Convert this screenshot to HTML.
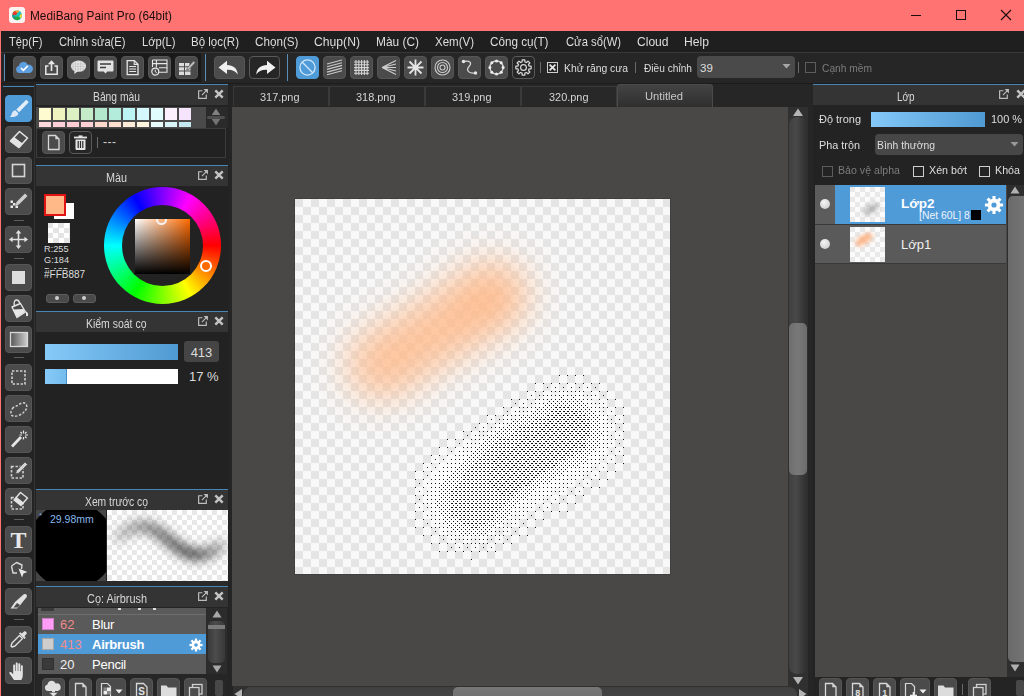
<!DOCTYPE html><html><head><meta charset="utf-8"><title>MediBang Paint Pro</title><style>
*{box-sizing:border-box}
html,body{margin:0;padding:0}
body{width:1024px;height:696px;overflow:hidden;background:#282828;font-family:"Liberation Sans",sans-serif;font-size:13px;color:#dcdcdc;position:relative}
.a{position:absolute}
.t{position:absolute;white-space:nowrap;line-height:1}
.btn{position:absolute;background:#4b4b4b;border-radius:4px;border:1px solid #565656}
.btn.dk{background:#262626;border:1px solid #5a5a5a}
.btn.on{background:#4f9bd8;border-color:#4f9bd8}
.btn svg{position:absolute;left:-1px;top:-1px}
.hd{position:absolute;background:#343434;border-top:1px solid #4a86b4;height:21px}
.hd .ti{position:absolute;left:0;right:0;top:4px;text-align:center;line-height:13px;font-size:13px;color:#d8d8d8}
.cb{position:absolute;width:11px;height:11px;border:1px solid #cfcfcf}
.cb.dis{border-color:#5c5c5c}
</style></head><body>
<div class="a" style="left:0;top:0;width:1024px;height:31px;background:#ff7373"></div>
<div class="a" style="left:0;top:0;width:1px;height:696px;background:#ff7373"></div>
<svg class="a" style="left:9px;top:7px" width="16" height="16" viewBox="0 0 16 16"><rect x="0" y="0" width="16" height="16" rx="3" fill="#fbf3f3"/>
<defs><clipPath id="cp"><circle cx="8.100" cy="8.300" r="4.900"/></clipPath><filter id="ib"><feGaussianBlur stdDeviation=".7"/></filter></defs>
<g clip-path="url(#cp)"><rect x="2" y="2" width="12" height="13" fill="#1fc4c0"/><g filter="url(#ib)"><circle cx="5.300" cy="5.200" r="3" fill="#e63a2a"/><circle cx="8.200" cy="3.800" r="1.900" fill="#ff9c2e"/><circle cx="7.600" cy="13.200" r="3.600" fill="#25a53f"/><circle cx="12.800" cy="9.200" r="2.200" fill="#e8d23c"/><circle cx="4" cy="10" r="2" fill="#1a9a8a"/></g></g></svg>
<div class="t fit" style="transform:scaleX(0.986);transform-origin:0 0;left:30px;top:10px;font-size:12px;color:#1b0d0d">MediBang Paint Pro (64bit)</div>
<div class="a" style="left:911px;top:15px;width:10px;height:1px;background:#1b0d0d"></div>
<div class="a" style="left:956px;top:10px;width:10px;height:10px;border:1px solid #1b0d0d"></div>
<svg class="a" style="left:1000px;top:9px" width="12" height="12" viewBox="0 0 12 12"><path d="M1 1L11 11M11 1L1 11" stroke="#1b0d0d" stroke-width="1.1" fill="none"/></svg>
<div class="a" style="left:1px;top:31px;width:1023px;height:21px;background:#1f1f1f"></div>
<div class="a" style="left:1px;top:52px;width:1023px;height:1px;background:#383838"></div>
<div class="t mn" style="transform:scaleX(0.859);transform-origin:0 0;left:9px;top:35px;font-size:13px;color:#dedede">Tệp(F)</div>
<div class="t mn" style="transform:scaleX(0.86);transform-origin:0 0;left:58.5px;top:35px;font-size:13px;color:#dedede">Chỉnh sửa(E)</div>
<div class="t mn" style="transform:scaleX(0.862);transform-origin:0 0;left:141.5px;top:35px;font-size:13px;color:#dedede">Lớp(L)</div>
<div class="t mn" style="transform:scaleX(0.886);transform-origin:0 0;left:191px;top:35px;font-size:13px;color:#dedede">Bộ lọc(R)</div>
<div class="t mn" style="transform:scaleX(0.898);transform-origin:0 0;left:255px;top:35px;font-size:13px;color:#dedede">Chọn(S)</div>
<div class="t mn" style="transform:scaleX(0.936);transform-origin:0 0;left:314px;top:35px;font-size:13px;color:#dedede">Chụp(N)</div>
<div class="t mn" style="transform:scaleX(0.916);transform-origin:0 0;left:376px;top:35px;font-size:13px;color:#dedede">Màu (C)</div>
<div class="t mn" style="transform:scaleX(0.885);transform-origin:0 0;left:435px;top:35px;font-size:13px;color:#dedede">Xem(V)</div>
<div class="t mn" style="transform:scaleX(0.9);transform-origin:0 0;left:490px;top:35px;font-size:13px;color:#dedede">Công cụ(T)</div>
<div class="t mn" style="transform:scaleX(0.865);transform-origin:0 0;left:565.5px;top:35px;font-size:13px;color:#dedede">Cửa sổ(W)</div>
<div class="t mn" style="transform:scaleX(0.927);transform-origin:0 0;left:636.5px;top:35px;font-size:13px;color:#dedede">Cloud</div>
<div class="t mn" style="transform:scaleX(0.935);transform-origin:0 0;left:684px;top:35px;font-size:13px;color:#dedede">Help</div>
<div class="a" style="left:1px;top:53px;width:1023px;height:30px;background:#262626"></div>
<div class="a" style="left:5px;top:53px;width:196px;height:29px;background:#1a1a1a"></div>
<div class="a" style="left:1px;top:83px;width:1023px;height:1px;background:#1c1c1c"></div>
<div class="a" style="left:4px;top:54px;width:1px;height:27px;background:#5b8fb8"></div>
<div class="a" style="left:205px;top:54px;width:1px;height:27px;background:#5b8fb8"></div>
<div class="a" style="left:287px;top:54px;width:1px;height:27px;background:#5b8fb8"></div>
<div class="btn " style="left:13px;top:56px;width:23px;height:23px"><svg width="23" height="23" viewBox="0 0 23 23" fill="none" stroke="none"><path d="M6.5 17a3.6 3.6 0 0 1-.6-7.1 4.6 4.6 0 0 1 8.8-1.2 4.2 4.2 0 0 1 2 8.3z" fill="#5d9fe0"/><path d="M8 12l2.4 2.4 4.4-4.6" stroke="#fff" stroke-width="1.7"/></svg></div>
<div class="btn " style="left:40px;top:56px;width:23px;height:23px"><svg width="23" height="23" viewBox="0 0 23 23" fill="none" stroke="none"><path d="M8.5 10H5.8v8.2h11.4V10h-2.7" stroke="#e6e6e6" stroke-width="1.5"/><path d="M11.5 15V5.5" stroke="#e6e6e6" stroke-width="1.7"/><path d="M7.8 8.2l3.7-4 3.7 4z" fill="#e6e6e6"/></svg></div>
<div class="btn " style="left:67px;top:56px;width:23px;height:23px"><svg width="23" height="23" viewBox="0 0 23 23" fill="none" stroke="none"><ellipse cx="11.5" cy="10.2" rx="7.6" ry="5.6" fill="#e6e6e6"/><path d="M7.5 14l-.2 4 3.6-2.8z" fill="#e6e6e6"/><path d="M6 6v9M8.5 5v10.5M11 4.5v11.5M13.5 4.5v11.5M16 5.5v10M4 8h15M4 10.5h15M4.5 13h14" stroke="#b4b4b4" stroke-width=".5"/></svg></div>
<div class="btn " style="left:94px;top:56px;width:23px;height:23px"><svg width="23" height="23" viewBox="0 0 23 23" fill="none" stroke="none"><path d="M4.5 4.5h14a1 1 0 0 1 1 1v9a1 1 0 0 1-1 1h-5.2l-1.8 2-1.8-2H4.5a1 1 0 0 1-1-1v-9a1 1 0 0 1 1-1z" fill="#e2e2e2"/><path d="M6 8h11M6 11.5h6" stroke="#3e3e3e" stroke-width="1.5"/></svg></div>
<div class="btn " style="left:121px;top:56px;width:23px;height:23px"><svg width="23" height="23" viewBox="0 0 23 23" fill="none" stroke="none"><path d="M6.2 4.6h7.2l3.6 3.6v10.4H6.2z" stroke="#e6e6e6" stroke-width="1.3"/><path d="M13.2 4.8v3.6h3.6" stroke="#e6e6e6" stroke-width="1.1"/><path d="M8.2 10.5h6.8M8.2 13h6.8M8.2 15.5h6.8" stroke="#e6e6e6" stroke-width="1.2"/></svg></div>
<div class="btn " style="left:148px;top:56px;width:23px;height:23px"><svg width="23" height="23" viewBox="0 0 23 23" fill="none" stroke="none"><path d="M4.5 4h14.5v12.2H10.5M4.5 4v7M4.5 7.6h14.5M8.4 4v7.4M11 11.8h8" stroke="#e6e6e6" stroke-width="1.1"/><circle cx="7.3" cy="15.6" r="3.5" stroke="#e6e6e6" stroke-width="1.2"/><path d="M7.3 13.6v2.2l1.5 1" stroke="#e6e6e6" stroke-width="1"/></svg></div>
<div class="btn " style="left:175px;top:56px;width:23px;height:23px"><svg width="23" height="23" viewBox="0 0 23 23" fill="none" stroke="none"><path d="M4 7h5v3.3H4zM10 7h4.5v3.3H10zM4 11.3h5v3.3H4zM10 11.3h5.5v3.3H10zM4 15.6h5v3.3H4zM10 15.6h5.5v3.3H10z" fill="#dcdcdc"/><path d="M12.5 11.5l6-6.5 1.8 1.7-6 6.5-2.6.9z" fill="#bdbdbd" stroke="#4b4b4b" stroke-width=".6"/></svg></div>
<div class="btn " style="left:214px;top:56px;width:31px;height:23px"><svg width="31" height="23" viewBox="0 0 31 23" fill="none" stroke="none"><path d="M4.5 11.5L13 4.8v4.2c6 .2 10.5 3.200 10.700 9.500c-2-3.600-5.500-5-10.700-4.800V18z" fill="#f0f0f0"/></svg></div>
<div class="btn dk" style="left:249px;top:56px;width:31px;height:23px"><svg width="31" height="23" viewBox="0 0 31 23" fill="none" stroke="none"><g transform="translate(31,0) scale(-1,1)"><path d="M4.5 11.5L13 4.8v4.2c6 .2 10.5 3.200 10.700 9.500c-2-3.600-5.500-5-10.700-4.800V18z" fill="#f0f0f0"/></g></svg></div>
<div class="btn on" style="left:296px;top:56px;width:23px;height:23px"><svg width="23" height="23" viewBox="0 0 23 23" fill="none" stroke="none"><circle cx="11.500" cy="11.500" r="7.600" stroke="#cfe6fa" stroke-width="1.300"/><path d="M6.300 6.300l10.400 10.400" stroke="#cfe6fa" stroke-width="1.300"/></svg></div>
<div class="btn " style="left:323px;top:56px;width:23px;height:23px"><svg width="23" height="23" viewBox="0 0 23 23" fill="none" stroke="none"><path d="M4 9.500l15-4M4 12.200l15-4M4 14.900l15-4M4 17.600l15-4M4 20.300l15-4" stroke="#c8c8c8" stroke-width="1.100" transform="translate(0,-1.500)"/></svg></div>
<div class="btn " style="left:350px;top:56px;width:23px;height:23px"><svg width="23" height="23" viewBox="0 0 23 23" fill="none" stroke="none"><path d="M6 4v15M8.800 4v15M11.600 4v15M14.400 4v15M17.200 4v15M4 6h15M4 8.800h15M4 11.600h15M4 14.400h15M4 17.200h15" stroke="#d4d4d4" stroke-width="1.100"/></svg></div>
<div class="btn " style="left:377px;top:56px;width:23px;height:23px"><svg width="23" height="23" viewBox="0 0 23 23" fill="none" stroke="none"><path d="M5 11.500L19 4.500M5 11.500L19 8M5 11.500H19M5 11.500L19 15M5 11.500L19 18.500" stroke="#cdcdcd" stroke-width="1.100"/></svg></div>
<div class="btn " style="left:404px;top:56px;width:23px;height:23px"><svg width="23" height="23" viewBox="0 0 23 23" fill="none" stroke="none"><path d="M11.500 3.500v16M3.500 11.500h16M5.500 5.500l12 12M17.500 5.500l-12 12" stroke="#e4e4e4" stroke-width="1.800"/></svg></div>
<div class="btn " style="left:431px;top:56px;width:23px;height:23px"><svg width="23" height="23" viewBox="0 0 23 23" fill="none" stroke="none"><circle cx="11.500" cy="11.500" r="7.500" stroke="#cdcdcd" stroke-width="1.100"/><circle cx="11.500" cy="11.500" r="5" stroke="#cdcdcd" stroke-width="1.100"/><circle cx="11.500" cy="11.500" r="2.500" stroke="#cdcdcd" stroke-width="1.100"/></svg></div>
<div class="btn " style="left:458px;top:56px;width:23px;height:23px"><svg width="23" height="23" viewBox="0 0 23 23" fill="none" stroke="none"><path d="M5.500 5.500c6-1.500 9 1 5.500 5s0 7.500 6.500 6.500" stroke="#d2d2d2" stroke-width="1.300"/><circle cx="5.500" cy="5.500" r="1.700" fill="#e6e6e6"/><circle cx="17.500" cy="17" r="1.700" fill="#e6e6e6"/></svg></div>
<div class="btn " style="left:485px;top:56px;width:23px;height:23px"><svg width="23" height="23" viewBox="0 0 23 23" fill="none" stroke="none"><circle cx="11.500" cy="11.500" r="6.600" stroke="#d6d6d6" stroke-width="1.400"/><circle cx="18.1" cy="11.5" r="1.500" fill="#eee"/><circle cx="16.2" cy="16.2" r="1.500" fill="#eee"/><circle cx="11.5" cy="18.1" r="1.500" fill="#eee"/><circle cx="6.8" cy="16.2" r="1.500" fill="#eee"/><circle cx="4.9" cy="11.5" r="1.500" fill="#eee"/><circle cx="6.8" cy="6.8" r="1.500" fill="#eee"/><circle cx="11.5" cy="4.9" r="1.500" fill="#eee"/><circle cx="16.2" cy="6.8" r="1.500" fill="#eee"/></svg></div>
<div class="btn dk" style="left:512px;top:56px;width:23px;height:23px"><svg width="23" height="23" viewBox="0 0 23 23" fill="none" stroke="none"><path d="M19.18 10.16L19.18 12.84L17.14 12.85L16.45 14.53L17.88 15.99L15.99 17.88L14.53 16.45L12.85 17.14L12.84 19.18L10.16 19.18L10.15 17.14L8.47 16.45L7.01 17.88L5.12 15.99L6.55 14.53L5.86 12.85L3.82 12.84L3.82 10.16L5.86 10.15L6.55 8.47L5.12 7.01L7.01 5.12L8.47 6.55L10.15 5.86L10.16 3.82L12.84 3.82L12.85 5.86L14.53 6.55L15.99 5.12L17.88 7.01L16.45 8.47L17.14 10.15Z" stroke="#d8d8d8" stroke-width="1.2" fill="none" stroke-linejoin="round"/><circle cx="11.5" cy="11.5" r="2.9" stroke="#d8d8d8" stroke-width="1.2" fill="none"/></svg></div>
<div class="a" style="left:540px;top:62px;width:1px;height:11px;background:#6a6a6a"></div>
<div class="cb" style="left:547px;top:62px"><svg class="a" style="left:0;top:0" width="9" height="9"><path d="M1.600 1.600l5.800 5.800M7.400 1.600l-5.800 5.800" stroke="#e8e8e8" stroke-width="1.700"/></svg></div>
<div class="t fit" style="transform:scaleX(0.901);transform-origin:0 0;left:564px;top:63px;font-size:11.5px;color:#dedede">Khử răng cưa</div>
<div class="a" style="left:635px;top:62px;width:1px;height:11px;background:#6a6a6a"></div>
<div class="t fit" style="transform:scaleX(0.883);transform-origin:0 0;left:644px;top:63px;font-size:11.5px;color:#dedede">Điều chỉnh</div>
<div class="a" style="left:697px;top:56px;width:98px;height:22px;background:#4a4a4a;border-radius:4px"></div>
<div class="t" style="left:700px;top:63px;font-size:11.5px;color:#dedede">39</div>
<svg class="a" style="left:782px;top:64px" width="9" height="5"><path d="M0.500 0h8l-4 4.500z" fill="#a6a6a6"/></svg>
<div class="a" style="left:798px;top:62px;width:1px;height:11px;background:#6a6a6a"></div>
<div class="cb dis" style="left:805px;top:62px"></div>
<div class="t fit" style="transform:scaleX(0.889);transform-origin:0 0;left:822px;top:63px;font-size:11.5px;color:#7c7c7c">Cạnh mềm</div>
<div class="a" style="left:1px;top:84px;width:35px;height:612px;background:#232323"></div>
<div class="a" style="left:3px;top:86px;width:32px;height:1px;background:#4a86b4"></div>
<div class="a" style="left:34px;top:84px;width:1px;height:612px;background:#343434"></div>
<div class="btn on" style="left:5px;top:95px;width:27px;height:27px"><svg width="27" height="27" viewBox="0 0 27 27" fill="none" stroke="none"><path d="M21.300 4.800l2.400 2.400-9.600 10-2.800-2.800z" fill="#e4eef8"/><path d="M10.400 15.200l3 3c-.6 3-3.800 4.400-8.600 3.600 2-1.200 1.800-3.600 2.800-5 .7-.9 1.800-1.400 2.800-1.600z" fill="#dbe9f6"/></svg></div>
<div class="btn " style="left:5px;top:126px;width:27px;height:27px"><svg width="27" height="27" viewBox="0 0 27 27" fill="none" stroke="none"><path d="M14.500 5.500l8 6.500-8.500 9.500-8.500-6.500z" stroke="#e4e4e4" stroke-width="1.600" stroke-linejoin="round"/><path d="M5.500 15l3.600-4 8.500 6.500-3.600 4z" fill="#e4e4e4"/></svg></div>
<div class="btn " style="left:5px;top:157px;width:27px;height:27px"><svg width="27" height="27" viewBox="0 0 27 27" fill="none" stroke="none"><rect x="7.500" y="7.500" width="12" height="12" stroke="#d6d6d6" stroke-width="1.600"/></svg></div>
<div class="btn " style="left:5px;top:188px;width:27px;height:27px"><svg width="27" height="27" viewBox="0 0 27 27" fill="none" stroke="none"><path d="M20 5.500l2.500 2.500-8.500 8.500-3.400.9.900-3.400z" fill="#cfcfcf"/><path d="M5.500 13.500h2.500v2.500h-2.500zM8 16h2.500v2.500h-2.500zM10.500 18.500h2.500v2.500h-2.500zM5.500 18.500h2.500v2.500h-2.500z" fill="#e8e8e8" transform="translate(0,-1)"/></svg></div>
<div class="btn " style="left:5px;top:226px;width:27px;height:27px"><svg width="27" height="27" viewBox="0 0 27 27" fill="none" stroke="none"><path d="M13.500 4l2.800 3.600h-2v5.100h5.100v-2l3.600 2.800-3.600 2.800v-2h-5.100v5.100h2l-2.800 3.600-2.800-3.600h2v-5.100h-5.100v2l-3.600-2.800 3.600-2.800v2h5.100v-5.100h-2z" fill="#e2e2e2"/></svg></div>
<div class="btn " style="left:5px;top:264px;width:27px;height:27px"><svg width="27" height="27" viewBox="0 0 27 27" fill="none" stroke="none"><rect x="7" y="7" width="13" height="13" fill="#dedede"/></svg></div>
<div class="btn " style="left:5px;top:295px;width:27px;height:27px"><svg width="27" height="27" viewBox="0 0 27 27" fill="none" stroke="none"><path d="M7 12l8.500-3.500 5 8.500-8.500 5.500z" stroke="#e6e6e6" stroke-width="1.400" stroke-linejoin="round"/><path d="M8 14.500l10.500-.5 1.500 3-8 5z" fill="#e6e6e6"/><path d="M9.500 11c-1-3.500 0-6 2-6s3 2 3.500 4" stroke="#e6e6e6" stroke-width="1.300"/><path d="M21 16.500c1.500.5 2.500 2 2 4-.5 1.200-2 1-2-.3z" fill="#e6e6e6"/></svg></div>
<div class="btn " style="left:5px;top:326px;width:27px;height:27px"><svg width="27" height="27" viewBox="0 0 27 27" fill="none" stroke="none"><defs><linearGradient id="tg" x1="0" y1="0" x2="1" y2="0"><stop offset="0" stop-color="#555"/><stop offset="1" stop-color="#d0d0d0"/></linearGradient></defs><rect x="5.500" y="6.500" width="17" height="14" fill="url(#tg)" stroke="#d8d8d8" stroke-width="1.300"/></svg></div>
<div class="btn " style="left:5px;top:364px;width:27px;height:27px"><svg width="27" height="27" viewBox="0 0 27 27" fill="none" stroke="none"><rect x="7" y="7" width="13" height="13" stroke="#cfcfcf" stroke-width="1.600" stroke-dasharray="2.400 1.600"/></svg></div>
<div class="btn " style="left:5px;top:395px;width:27px;height:27px"><svg width="27" height="27" viewBox="0 0 27 27" fill="none" stroke="none"><path d="M7.500 13.500c1.500-2.500 4-2 6.500-4s6.500-2.500 7.500.5-1 6-3.500 8-7 4-10 3-2.500-5-.5-7.500z" stroke="#cfcfcf" stroke-width="1.500" stroke-dasharray="2.400 1.600"/></svg></div>
<div class="btn " style="left:5px;top:426px;width:27px;height:27px"><svg width="27" height="27" viewBox="0 0 27 27" fill="none" stroke="none"><path d="M6 19.500l2 2 9-9.500-2-2z" fill="#e6e6e6"/><path d="M18.500 4.500v3M18.500 11v2.500M14.500 9h2.500M20 9h3M15.500 6l1.500 1.500M20 10.500l1.500 1.500M21.500 6l-1.500 1.500" stroke="#e6e6e6" stroke-width="1.200"/></svg></div>
<div class="btn " style="left:5px;top:457px;width:27px;height:27px"><svg width="27" height="27" viewBox="0 0 27 27" fill="none" stroke="none"><rect x="6.500" y="9.500" width="11.500" height="11.500" stroke="#cfcfcf" stroke-width="1.600" stroke-dasharray="2.400 1.600"/><path d="M20 5l2.500 2.500-8.500 8.500-3.400.9.900-3.400z" fill="#d4d4d4" stroke="#4b4b4b" stroke-width=".7"/></svg></div>
<div class="btn " style="left:5px;top:488px;width:27px;height:27px"><svg width="27" height="27" viewBox="0 0 27 27" fill="none" stroke="none"><rect x="6.500" y="9.500" width="11.500" height="11.500" stroke="#cfcfcf" stroke-width="1.600" stroke-dasharray="2.400 1.600"/><path d="M15.500 4.500l7 5.500-6.500 7.500-7-5.500z" fill="#4b4b4b" stroke="#e4e4e4" stroke-width="1.400" stroke-linejoin="round"/><path d="M9 12l2.600-3 7 5.500-2.600 3z" fill="#e4e4e4"/></svg></div>
<div class="btn " style="left:5px;top:526px;width:27px;height:27px"><svg width="27" height="27" viewBox="0 0 27 27" fill="none" stroke="none"><text x="13.500" y="22" font-family="Liberation Serif,serif" font-weight="bold" font-size="24" text-anchor="middle" fill="#e8e8e8">T</text></svg></div>
<div class="btn " style="left:5px;top:557px;width:27px;height:27px"><svg width="27" height="27" viewBox="0 0 27 27" fill="none" stroke="none"><path d="M6.500 9l5-3.500 5.500 2.500-.5 4M6.500 9l1.500 7h4" stroke="#d8d8d8" stroke-width="1.400" stroke-linejoin="round"/><path d="M13.500 11.500l9 3.500-4 1.500-1.500 4z" fill="#e8e8e8"/></svg></div>
<div class="btn " style="left:5px;top:588px;width:27px;height:27px"><svg width="27" height="27" viewBox="0 0 27 27" fill="none" stroke="none"><path d="M5.500 20.500l4.500-6.500 8.500-7.500c2-1.500 4.500.5 3 2.800l-7 8.700-2.500 2.500z" fill="#e0e0e0"/><path d="M8.500 19.500l3.500-4.500 3 2-2 2.500z" fill="#4b4b4b"/></svg></div>
<div class="btn " style="left:5px;top:626px;width:27px;height:27px"><svg width="27" height="27" viewBox="0 0 27 27" fill="none" stroke="none"><path d="M7 21l-1-1 1-3 7.500-7.500 3 3-7.500 7.500z" stroke="#e0e0e0" stroke-width="1.400" stroke-linejoin="round"/><path d="M14 7.500l5.500 5.500 1.300-1.300-1.300-1.500 2-2.200c1-1.500-1-3.500-2.500-2.500l-2.200 2-1.500-1.300z" fill="#e0e0e0"/></svg></div>
<div class="btn " style="left:5px;top:657px;width:27px;height:27px"><svg width="27" height="27" viewBox="0 0 27 27" fill="none" stroke="none"><path d="M9 23c-1.500-2-3-4.500-4.500-6.500-.8-1.200.6-2.200 1.700-1.200l2 2v-8.800c0-1.400 1.900-1.400 1.900 0v5.500h.6v-7.500c0-1.400 2-1.400 2 0v7.500h.6v-6.700c0-1.400 2-1.400 2 0v7h.6v-5c0-1.300 1.900-1.300 1.900 0v8.200c0 2.500-.6 4-1.500 5.500z" fill="#e4e4e4"/></svg></div>
<div class="a" style="left:14px;top:220px;width:10px;height:1px;background:#5e5e5e"></div>
<div class="a" style="left:14px;top:258px;width:10px;height:1px;background:#5e5e5e"></div>
<div class="a" style="left:14px;top:357px;width:10px;height:1px;background:#5e5e5e"></div>
<div class="a" style="left:14px;top:519px;width:10px;height:1px;background:#5e5e5e"></div>
<div class="a" style="left:14px;top:619px;width:10px;height:1px;background:#5e5e5e"></div>
<div class="a" style="left:36px;top:84px;width:193px;height:612px;background:#232323"></div>
<div class="a" style="left:229px;top:84px;width:4px;height:612px;background:#252525"></div>
<div class="hd" style="left:36px;top:84px;width:192px"><svg class="a" style="left:161px;top:3px" width="12" height="12" viewBox="0 0 11 11"><path d="M5 2.500H1.500v7h7V6" stroke="#bdbdbd" stroke-width="1.100" fill="none"/><path d="M4.500 6.500L9 2" stroke="#bdbdbd" stroke-width="1.100"/><path d="M6 1h4v4z" fill="#bdbdbd"/></svg><svg class="a" style="left:178px;top:4px" width="10" height="10" viewBox="0 0 10 10"><path d="M1.300 1.300l7.400 7.400M8.700 1.300l-7.400 7.400" stroke="#c4c4c4" stroke-width="2.400"/></svg></div>
<div class="t fit" style="transform:scaleX(0.859);transform-origin:0 0;left:93px;top:90.5px;font-size:12px;color:#d8d8d8">Bảng màu</div>
<div class="a" style="left:36px;top:107px;width:170px;height:21px;background:#4a4a4a"></div>
<div class="a" style="left:39px;top:108px;width:12px;height:12px;background:#fffbd0"></div>
<div class="a" style="left:53px;top:108px;width:12px;height:12px;background:#eef3c0"></div>
<div class="a" style="left:67px;top:108px;width:12px;height:12px;background:#dcf0c4"></div>
<div class="a" style="left:81px;top:108px;width:12px;height:12px;background:#c4ecc8"></div>
<div class="a" style="left:95px;top:108px;width:12px;height:12px;background:#b4e8cc"></div>
<div class="a" style="left:109px;top:108px;width:12px;height:12px;background:#b4ecdc"></div>
<div class="a" style="left:123px;top:108px;width:12px;height:12px;background:#bcf4f4"></div>
<div class="a" style="left:137px;top:108px;width:12px;height:12px;background:#d4f8fc"></div>
<div class="a" style="left:151px;top:108px;width:12px;height:12px;background:#e0fcfc"></div>
<div class="a" style="left:165px;top:108px;width:12px;height:12px;background:#fbf0fc"></div>
<div class="a" style="left:179px;top:108px;width:12px;height:12px;background:#f6e4fc"></div>
<div class="a" style="left:39px;top:122px;width:12px;height:5px;background:#ffd8dc"></div>
<div class="a" style="left:53px;top:122px;width:12px;height:5px;background:#ffd0d8"></div>
<div class="a" style="left:67px;top:122px;width:12px;height:5px;background:#ffccd4"></div>
<div class="a" style="left:81px;top:122px;width:12px;height:5px;background:#ffd0d4"></div>
<div class="a" style="left:95px;top:122px;width:12px;height:5px;background:#ffd8cc"></div>
<div class="a" style="left:109px;top:122px;width:12px;height:5px;background:#ffe0d0"></div>
<div class="a" style="left:123px;top:122px;width:12px;height:5px;background:#ffecd8"></div>
<div class="a" style="left:137px;top:122px;width:12px;height:5px;background:#fff4e0"></div>
<div class="a" style="left:151px;top:122px;width:12px;height:5px;background:#e8fcfc"></div>
<div class="a" style="left:165px;top:122px;width:12px;height:5px;background:#d8f4f8"></div>
<div class="a" style="left:179px;top:122px;width:12px;height:5px;background:#c4e8f0"></div>
<div class="a" style="left:206px;top:107px;width:22px;height:21px;background:#2a2a2a"></div>
<div class="a" style="left:207px;top:116px;width:18px;height:3px;background:#4e4e4e;border-radius:2px"></div>
<svg class="a" style="left:211px;top:108px" width="10" height="18" viewBox="0 0 10 18"><path d="M5 0.500L9.300 7H.700z" fill="#808080"/><path d="M5 17.500L9.300 11H.700z" fill="#747474"/></svg>
<div class="a" style="left:36px;top:128px;width:190px;height:30px;background:#222;border:1px solid #3c3c3c"></div>
<div class="btn " style="left:42px;top:131px;width:23px;height:23px"><svg width="23" height="23" viewBox="0 0 23 23" fill="none" stroke="none"><path d="M6.500 4.500h7l3.500 3.500v10.500h-10.500z" stroke="#d8d8d8" stroke-width="1.300" fill="#4b4b4b"/><path d="M13.300 4.700v3.500h3.500z" fill="#d8d8d8"/></svg></div>
<div class="btn dk" style="left:69px;top:131px;width:23px;height:23px"><svg width="23" height="23" viewBox="0 0 23 23" fill="none" stroke="none"><path d="M6.500 8.500h10v9.500a1 1 0 0 1-1 1h-8a1 1 0 0 1-1-1z" fill="#e4e4e4"/><path d="M5 6.500h13" stroke="#e4e4e4" stroke-width="1.800"/><path d="M9.500 5.200h4" stroke="#e4e4e4" stroke-width="1.600"/><path d="M9.200 10v7M11.500 10v7M13.800 10v7" stroke="#2a2a2a" stroke-width="1.200"/></svg></div>
<div class="a" style="left:97px;top:137px;width:1px;height:11px;background:#6a6a6a"></div>
<div class="t" style="left:103px;top:136px;font-size:12px;color:#cfcfcf;letter-spacing:.5px">---</div>
<div class="hd" style="left:36px;top:165px;width:192px"><svg class="a" style="left:161px;top:3px" width="12" height="12" viewBox="0 0 11 11"><path d="M5 2.500H1.500v7h7V6" stroke="#bdbdbd" stroke-width="1.100" fill="none"/><path d="M4.500 6.500L9 2" stroke="#bdbdbd" stroke-width="1.100"/><path d="M6 1h4v4z" fill="#bdbdbd"/></svg><svg class="a" style="left:178px;top:4px" width="10" height="10" viewBox="0 0 10 10"><path d="M1.300 1.300l7.400 7.400M8.700 1.300l-7.400 7.400" stroke="#c4c4c4" stroke-width="2.400"/></svg></div>
<div class="t fit" style="transform:scaleX(0.9);transform-origin:0 0;left:106px;top:171.5px;font-size:12px;color:#d8d8d8">Màu</div>
<div class="a" style="left:36px;top:187px;width:192px;height:124px;background:#222"></div>
<div class="a" style="left:54px;top:203px;width:20px;height:16px;background:#fff"></div>
<div class="a" style="left:44px;top:194px;width:22px;height:22px;background:#ffb887;border:2px solid #e01414"></div>
<div class="a" style="left:48px;top:223px;width:22px;height:20px;background-color:#fff;background-image:conic-gradient(#e4e4e4 25%,#fff 0 50%,#e4e4e4 0 75%,#fff 0);background-size:11px 10px;background-position:5px 0"></div>
<div class="t" style="left:44px;top:245px;font-size:9.200px;color:#dcdcdc">R:255</div>
<div class="t" style="left:44px;top:256px;font-size:9.200px;color:#dcdcdc">G:184</div>
<div class="a" style="left:44px;top:267px;width:40px;height:2px;overflow:hidden"><div class="t" style="left:0;top:0;font-size:9.200px;color:#dcdcdc">B:135</div></div>
<div class="t" style="left:44px;top:269.500px;font-size:10px;color:#dcdcdc">#FFB887</div>
<div class="a" style="left:104px;top:187px;width:117px;height:117px;border-radius:50%;background:conic-gradient(from 90deg,#f00,#ff0,#0f0,#0ff,#00f,#f0f,#f00)"></div>
<div class="a" style="left:122px;top:205px;width:81px;height:81px;border-radius:50%;background:#222"></div>
<div class="a" style="left:135px;top:219px;width:55px;height:55px;background:linear-gradient(to bottom,rgba(0,0,0,0),#000),linear-gradient(to right,#fff,#ff6a00)"></div>
<div class="a" style="left:156px;top:214px;width:11px;height:11px;border-radius:50%;border:2px solid #f4f4f4;clip-path:inset(5px 0 0 0)"></div>
<div class="a" style="left:200px;top:260px;width:12px;height:12px;border-radius:50%;border:2px solid #fff;background:#ff6a00"></div>
<div class="a" style="left:46px;top:294px;width:23px;height:9px;background:#4a4a4a;border:1px solid #5c5c5c;border-radius:3px"></div>
<div class="a" style="left:55px;top:296px;width:4px;height:4px;border-radius:50%;background:#cfcfcf"></div>
<div class="a" style="left:73px;top:294px;width:23px;height:9px;background:#4a4a4a;border:1px solid #5c5c5c;border-radius:3px"></div>
<div class="a" style="left:82px;top:296px;width:4px;height:4px;border-radius:50%;background:#cfcfcf"></div>
<div class="hd" style="left:36px;top:311px;width:192px"><svg class="a" style="left:161px;top:3px" width="12" height="12" viewBox="0 0 11 11"><path d="M5 2.500H1.500v7h7V6" stroke="#bdbdbd" stroke-width="1.100" fill="none"/><path d="M4.500 6.500L9 2" stroke="#bdbdbd" stroke-width="1.100"/><path d="M6 1h4v4z" fill="#bdbdbd"/></svg><svg class="a" style="left:178px;top:4px" width="10" height="10" viewBox="0 0 10 10"><path d="M1.300 1.300l7.400 7.400M8.700 1.300l-7.400 7.400" stroke="#c4c4c4" stroke-width="2.400"/></svg></div>
<div class="t fit" style="transform:scaleX(0.872);transform-origin:0 0;left:86px;top:317.5px;font-size:12px;color:#d8d8d8">Kiểm soát cọ</div>
<div class="a" style="left:36px;top:333px;width:192px;height:156px;background:#222"></div>
<div class="a" style="left:45px;top:344px;width:133px;height:16px;background:linear-gradient(to right,#86caf8,#4f9ad2)"></div>
<div class="a" style="left:184px;top:341px;width:35px;height:21px;background:#454545;border-radius:3px"></div>
<div class="t" style="left:184px;top:346px;width:35px;text-align:center;font-size:13px;color:#dcdcdc">413</div>
<div class="a" style="left:45px;top:369px;width:133px;height:15px;background:#fff"></div>
<div class="a" style="left:45px;top:369px;width:22px;height:15px;background:linear-gradient(to right,#86caf8,#74bcee);border-right:1px solid #4a8cc4"></div>
<div class="t" style="left:189px;top:370px;font-size:13px;color:#dcdcdc">17 %</div>
<div class="hd" style="left:36px;top:489px;width:192px"><svg class="a" style="left:161px;top:3px" width="12" height="12" viewBox="0 0 11 11"><path d="M5 2.500H1.500v7h7V6" stroke="#bdbdbd" stroke-width="1.100" fill="none"/><path d="M4.500 6.500L9 2" stroke="#bdbdbd" stroke-width="1.100"/><path d="M6 1h4v4z" fill="#bdbdbd"/></svg><svg class="a" style="left:178px;top:4px" width="10" height="10" viewBox="0 0 10 10"><path d="M1.300 1.300l7.400 7.400M8.700 1.300l-7.400 7.400" stroke="#c4c4c4" stroke-width="2.400"/></svg></div>
<div class="t fit" style="transform:scaleX(0.86);transform-origin:0 0;left:85.4px;top:495.5px;font-size:12px;color:#d8d8d8">Xem trước cọ</div>
<div class="a" style="left:36px;top:510px;width:70px;height:71px;background:#454545;overflow:hidden"><div class="a" style="left:-8px;top:-8px;width:87px;height:87px;border-radius:50%;background:#000"></div></div>
<div class="t" style="left:39px;top:512px;font-size:8px;color:#7fb0e4">*</div>
<div class="t" style="left:50px;top:514px;font-size:10.500px;color:#86b8ec">29.98mm</div>
<div class="a" style="left:107px;top:510px;width:121px;height:71px;background-color:#fff;background-image:conic-gradient(#e8e8e8 25%,#fff 0 50%,#e8e8e8 0 75%,#fff 0);background-size:10px 10px;overflow:hidden"><svg class="a" style="left:0;top:0" width="121" height="71"><defs><filter id="pb" filterUnits="userSpaceOnUse" x="-20" y="-20" width="161" height="111"><feGaussianBlur stdDeviation="5.200"/></filter><linearGradient id="pg" gradientUnits="userSpaceOnUse" x1="10" y1="0" x2="116" y2="0"><stop offset="0" stop-color="#000" stop-opacity=".22"/><stop offset=".3" stop-color="#000" stop-opacity=".5"/><stop offset=".72" stop-color="#000" stop-opacity=".74"/><stop offset="1" stop-color="#000" stop-opacity=".3"/></linearGradient></defs><path d="M12 27C34 6 50 20 64 32S94 52 114 36" stroke="url(#pg)" stroke-width="11" fill="none" stroke-linecap="round" filter="url(#pb)"/></svg></div>
<div class="a" style="left:36px;top:581px;width:192px;height:5px;background:#2a2a2a"></div>
<div class="hd" style="left:36px;top:586px;width:192px"><svg class="a" style="left:161px;top:3px" width="12" height="12" viewBox="0 0 11 11"><path d="M5 2.500H1.500v7h7V6" stroke="#bdbdbd" stroke-width="1.100" fill="none"/><path d="M4.500 6.500L9 2" stroke="#bdbdbd" stroke-width="1.100"/><path d="M6 1h4v4z" fill="#bdbdbd"/></svg><svg class="a" style="left:178px;top:4px" width="10" height="10" viewBox="0 0 10 10"><path d="M1.300 1.300l7.400 7.400M8.700 1.300l-7.400 7.400" stroke="#c4c4c4" stroke-width="2.400"/></svg></div>
<div class="t fit" style="transform:scaleX(0.909);transform-origin:0 0;left:86.8px;top:592.5px;font-size:12px;color:#d8d8d8">Cọ: Airbrush</div>
<div class="a" style="left:36px;top:608px;width:192px;height:88px;background:#262626"></div>
<div class="a" style="left:38px;top:608px;width:168px;height:66px;background:#5a5a5a"></div>
<div class="a" style="left:38px;top:614px;width:168px;height:1px;background:#6e6e6e"></div>
<div class="a" style="left:41px;top:608px;width:13px;height:3px;background:#3a3a3a"></div>
<div class="a" style="left:118px;top:608px;width:3px;height:2px;background:#ddd"></div><div class="a" style="left:138px;top:608px;width:3px;height:2px;background:#ddd"></div><div class="a" style="left:153px;top:608px;width:3px;height:2px;background:#ddd"></div>
<div class="a" style="left:38px;top:634px;width:168px;height:20px;background:#4f9bd8"></div>
<div class="a" style="left:42px;top:618px;width:12px;height:12px;background:#ff9cf4;border:1px solid rgba(0,0,0,.18)"></div>
<div class="t" style="left:60px;top:618px;font-size:13px;color:#ee8a8a">62</div>
<div class="t" style="left:92px;top:618px;font-size:13px;letter-spacing:-.250px;color:#fff;">Blur</div>
<div class="a" style="left:42px;top:638px;width:12px;height:12px;background:#cdcdcd;border:1px solid rgba(0,0,0,.18)"></div>
<div class="t" style="left:60px;top:638px;font-size:13px;color:#f08c8c">413</div>
<div class="t" style="left:92px;top:638px;font-size:13px;letter-spacing:-.250px;color:#fff;font-weight:bold;">Airbrush</div>
<div class="a" style="left:42px;top:658px;width:12px;height:12px;background:#3a3a3a;border:1px solid rgba(0,0,0,.18)"></div>
<div class="t" style="left:60px;top:658px;font-size:13px;color:#f0f0f0">20</div>
<div class="t" style="left:92px;top:658px;font-size:13px;letter-spacing:-.250px;color:#fff;">Pencil</div>
<svg class="a" style="left:189px;top:638px" width="14" height="14" viewBox="0 0 14 14"><path d="M13.50 5.87L13.50 8.13L11.47 8.07L10.92 9.40L12.40 10.80L10.80 12.40L9.40 10.92L8.07 11.47L8.13 13.50L5.87 13.50L5.93 11.47L4.60 10.92L3.20 12.40L1.60 10.80L3.08 9.40L2.53 8.07L0.50 8.13L0.50 5.87L2.53 5.93L3.08 4.60L1.60 3.20L3.20 1.60L4.60 3.08L5.93 2.53L5.87 0.50L8.13 0.50L8.07 2.53L9.40 3.08L10.80 1.60L12.40 3.20L10.92 4.60L11.47 5.93Z M5.20 7.00a1.8 1.8 0 1 0 3.60 0a1.8 1.8 0 1 0 -3.60 0z" fill="#fff" fill-rule="evenodd"/></svg>
<div class="a" style="left:206px;top:608px;width:21px;height:66px;background:#2c2c2c"></div>
<svg class="a" style="left:212px;top:610px" width="10" height="8"><path d="M5 .500L9.500 7.500H.500z" fill="#a8a8a8"/></svg>
<svg class="a" style="left:212px;top:665px" width="10" height="8"><path d="M5 7.500L9.500 .500H.500z" fill="#a8a8a8"/></svg>
<div class="a" style="left:208px;top:621px;width:17px;height:42px;border-radius:5px;background:linear-gradient(to right,#3a3a3a,#4c4c4c 45%,#383838)"></div>
<div class="a" style="left:208px;top:625px;width:17px;height:4px;background:#7a7a7a"></div>
<div class="btn " style="left:42px;top:678px;width:23px;height:23px"><svg width="23" height="23" viewBox="0 0 23 23" fill="none" stroke="none"><path d="M6 13a3.300 3.300 0 0 1-.500-6.500 4.300 4.300 0 0 1 8.200-1.100 3.900 3.900 0 0 1 2 7.600z" fill="#e0e0e0"/><path d="M11.500 9.500v7" stroke="#e0e0e0" stroke-width="3"/><path d="M11.500 9.500v7" stroke="#e0e0e0" stroke-width="3"/><path d="M7 14.500h9l-4.500 4.500z" fill="#e0e0e0" stroke="#4b4b4b" stroke-width=".6"/></svg></div>
<div class="btn " style="left:69px;top:678px;width:23px;height:23px"><svg width="23" height="23" viewBox="0 0 23 23" fill="none" stroke="none"><path d="M6.500 5.500h7l3.500 3.500v12h-10.500z" stroke="#d8d8d8" stroke-width="1.300" fill="none"/><path d="M13.300 5.700v3.500h3.500z" fill="#d8d8d8"/></svg></div>
<div class="btn " style="left:96px;top:678px;width:30px;height:23px"><svg width="30" height="23" viewBox="0 0 30 23" fill="none" stroke="none"><path d="M5.500 5.500h6l3 3v12h-9z" stroke="#d8d8d8" stroke-width="1.200" fill="none"/><path d="M7.500 9.500h3.500v3.500h-3.500zM11 13h3.500v3.500h-3.500z" fill="#8a8a8a"/><path d="M11 9.500h3.500v3.500h-3.500zM7.500 13h3.500v3.500h-3.500z" fill="#ececec"/><path d="M19.500 11.500h7l-3.500 4z" fill="#eee"/></svg></div>
<div class="btn " style="left:130px;top:678px;width:23px;height:23px"><svg width="23" height="23" viewBox="0 0 23 23" fill="none" stroke="none"><path d="M6.500 5.500h7l3.500 3.500v12h-10.500z" stroke="#d8d8d8" stroke-width="1.300" fill="none"/><text x="11.700" y="16.500" font-size="10" font-weight="bold" text-anchor="middle" fill="#e0e0e0" font-family="Liberation Sans,sans-serif">S</text></svg></div>
<div class="btn " style="left:157px;top:678px;width:23px;height:23px"><svg width="23" height="23" viewBox="0 0 23 23" fill="none" stroke="none"><path d="M4 7.500h5.500l1.500 2h8.500v10h-15.500z" fill="#dcdcdc"/></svg></div>
<div class="btn " style="left:184px;top:678px;width:23px;height:23px"><svg width="23" height="23" viewBox="0 0 23 23" fill="none" stroke="none"><rect x="8.500" y="6.500" width="9.500" height="9.500" stroke="#d0d0d0" stroke-width="1.300"/><rect x="5.500" y="9.500" width="9.500" height="9.500" stroke="#d0d0d0" stroke-width="1.300" fill="#4b4b4b"/></svg></div>
<div class="a" style="left:215px;top:680px;width:8px;height:16px;background:#484848;border-radius:2px"></div>
<div class="a" style="left:233px;top:84px;width:580px;height:23px;background:#262626"></div>
<div class="a" style="left:233px;top:86px;width:96px;height:20px;background:#282828;border:1px solid #3a3a3a;border-bottom:none"></div>
<div class="t fit" style="transform:scaleX(0.95);transform-origin:0 0;left:260px;top:92px;font-size:11.500px;color:#d4d4d4">317.png</div>
<div class="a" style="left:329px;top:86px;width:96px;height:20px;background:#282828;border:1px solid #3a3a3a;border-bottom:none"></div>
<div class="t fit" style="transform:scaleX(0.95);transform-origin:0 0;left:356px;top:92px;font-size:11.500px;color:#d4d4d4">318.png</div>
<div class="a" style="left:425px;top:86px;width:96px;height:20px;background:#282828;border:1px solid #3a3a3a;border-bottom:none"></div>
<div class="t fit" style="transform:scaleX(0.95);transform-origin:0 0;left:452px;top:92px;font-size:11.500px;color:#d4d4d4">319.png</div>
<div class="a" style="left:521px;top:86px;width:96px;height:20px;background:#282828;border:1px solid #3a3a3a;border-bottom:none"></div>
<div class="t fit" style="transform:scaleX(0.95);transform-origin:0 0;left:549px;top:92px;font-size:11.500px;color:#d4d4d4">320.png</div>
<div class="a" style="left:617px;top:84px;width:96px;height:23px;background:linear-gradient(#434343,#2f2f2f);border:1px solid #4a4a4a;border-bottom:none;border-radius:3px 3px 0 0"></div>
<div class="t fit" style="transform:scaleX(0.974);transform-origin:0 0;left:645px;top:91px;font-size:11.500px;color:#c8c8c8">Untitled</div>
<div class="a" style="left:232px;top:107px;width:556px;height:579px;background:#4a4847"></div>
<div class="a" style="left:295px;top:199px;width:375px;height:375px;overflow:hidden;background-color:#f8f8f8;background-image:conic-gradient(#f8f8f8 25%,#e5e5e5 0 50%,#f8f8f8 0 75%,#e5e5e5 0);background-size:16px 16px;box-shadow:0 0 0 1px rgba(60,58,57,.6)"><svg class="a" style="left:0;top:0" width="375" height="375" viewBox="295 199 375 375"><defs><filter id="ob" filterUnits="userSpaceOnUse" x="255" y="159" width="455" height="455"><feGaussianBlur stdDeviation="19"/></filter><filter id="wb" filterUnits="userSpaceOnUse" x="255" y="159" width="455" height="455"><feGaussianBlur stdDeviation="6.500"/></filter></defs><linearGradient id="og" gradientUnits="userSpaceOnUse" x1="381" y1="365" x2="493" y2="296"><stop offset="0" stop-color="#ffb887" stop-opacity=".88"/><stop offset=".5" stop-color="#ffb887" stop-opacity=".84"/><stop offset="1" stop-color="#ffb887" stop-opacity="1"/></linearGradient><path d="M381 365L493 296" stroke="url(#og)" stroke-width="66" stroke-linecap="round" opacity=".94" filter="url(#ob)"/><path d="M468.500 495.500L567.500 434.500" stroke="#fff" stroke-width="88" stroke-linecap="round" opacity=".93" filter="url(#wb)"/><path d="M559 375.5h1M567 375.5h1M575 375.5h1M583 375.5h1M535 383.5h1M543 383.5h1M551 383.5h1M559 383.5h1M567 383.5h1M575 383.5h1M583 383.5h1M591 383.5h1M599 383.5h1M547 387.5h1M555 387.5h1M563 387.5h1M571 387.5h1M579 387.5h1M587 387.5h1M595 387.5h1M527 391.5h1M535 391.5h1M543 391.5h1M551 391.5h1M555 391.5h1M559 391.5h1M563 391.5h1M567 391.5h1M571 391.5h1M575 391.5h1M579 391.5h1M583 391.5h1M591 391.5h1M599 391.5h1M607 391.5h1M531 395.5h1M539 395.5h1M543 395.5h1M547 395.5h1M551 395.5h1M555 395.5h1M559 395.5h1M563 395.5h1M567 395.5h1M571 395.5h1M575 395.5h1M579 395.5h1M583 395.5h1M587 395.5h1M591 395.5h1M595 395.5h1M603 395.5h1M561 397.5h1M573 397.5h1M511 399.5h1M519 399.5h1M527 399.5h1M535 399.5h1M539 399.5h1M543 399.5h1M547 399.5h1M551 399.5h1M555 399.5h1M559 399.5h1M563 399.5h1M567 399.5h1M571 399.5h1M575 399.5h1M579 399.5h1M583 399.5h1M587 399.5h1M591 399.5h1M599 399.5h1M607 399.5h1M615 399.5h1M549 401.5h1M553 401.5h1M557 401.5h1M561 401.5h1M565 401.5h1M569 401.5h1M573 401.5h1M577 401.5h1M581 401.5h1M515 403.5h1M523 403.5h1M531 403.5h1M535 403.5h1M539 403.5h1M543 403.5h1M547 403.5h1M551 403.5h1M555 403.5h1M559 403.5h1M563 403.5h1M567 403.5h1M571 403.5h1M575 403.5h1M579 403.5h1M583 403.5h1M587 403.5h1M591 403.5h1M595 403.5h1M599 403.5h1M603 403.5h1M545 405.5h1M549 405.5h1M553 405.5h1M557 405.5h1M561 405.5h1M565 405.5h1M569 405.5h1M573 405.5h1M577 405.5h1M581 405.5h1M585 405.5h1M503 407.5h1M511 407.5h1M519 407.5h1M523 407.5h1M527 407.5h1M531 407.5h1M535 407.5h1M539 407.5h1M543 407.5h1M547 407.5h1M551 407.5h1M571 407.5h1M575 407.5h1M579 407.5h1M583 407.5h1M587 407.5h1M591 407.5h1M595 407.5h1M599 407.5h1M603 407.5h1M607 407.5h1M615 407.5h1M623 407.5h1M537 409.5h1M541 409.5h1M545 409.5h1M549 409.5h1M553 409.5h1M557 409.5h1M561 409.5h1M565 409.5h1M569 409.5h1M573 409.5h1M577 409.5h1M581 409.5h1M585 409.5h1M589 409.5h1M507 411.5h1M515 411.5h1M519 411.5h1M523 411.5h1M527 411.5h1M531 411.5h1M535 411.5h1M539 411.5h1M543 411.5h1M547 411.5h1M583 411.5h1M587 411.5h1M591 411.5h1M595 411.5h1M599 411.5h1M603 411.5h1M611 411.5h1M533 413.5h1M537 413.5h1M541 413.5h1M545 413.5h1M549 413.5h1M553 413.5h1M561 413.5h1M569 413.5h1M577 413.5h1M581 413.5h1M585 413.5h1M589 413.5h1M593 413.5h1M487 415.5h1M495 415.5h1M503 415.5h1M507 415.5h1M511 415.5h1M515 415.5h1M519 415.5h1M523 415.5h1M527 415.5h1M531 415.5h1M535 415.5h1M539 415.5h1M543 415.5h1M587 415.5h1M591 415.5h1M595 415.5h1M599 415.5h1M603 415.5h1M607 415.5h1M615 415.5h1M623 415.5h1M521 417.5h1M525 417.5h1M529 417.5h1M533 417.5h1M537 417.5h1M541 417.5h1M545 417.5h1M549 417.5h1M557 417.5h1M565 417.5h1M573 417.5h1M581 417.5h1M585 417.5h1M589 417.5h1M593 417.5h1M597 417.5h1M491 419.5h1M499 419.5h1M503 419.5h1M507 419.5h1M511 419.5h1M515 419.5h1M519 419.5h1M523 419.5h1M527 419.5h1M531 419.5h1M591 419.5h1M595 419.5h1M599 419.5h1M603 419.5h1M607 419.5h1M611 419.5h1M619 419.5h1M513 421.5h1M517 421.5h1M521 421.5h1M525 421.5h1M529 421.5h1M533 421.5h1M537 421.5h1M541 421.5h1M545 421.5h1M553 421.5h1M561 421.5h1M569 421.5h1M577 421.5h1M585 421.5h1M589 421.5h1M593 421.5h1M597 421.5h1M479 423.5h1M487 423.5h1M495 423.5h1M499 423.5h1M503 423.5h1M507 423.5h1M511 423.5h1M515 423.5h1M519 423.5h1M523 423.5h1M527 423.5h1M591 423.5h1M595 423.5h1M599 423.5h1M603 423.5h1M607 423.5h1M611 423.5h1M615 423.5h1M623 423.5h1M509 425.5h1M513 425.5h1M517 425.5h1M521 425.5h1M525 425.5h1M529 425.5h1M533 425.5h1M537 425.5h1M541 425.5h1M549 425.5h1M557 425.5h1M565 425.5h1M573 425.5h1M581 425.5h1M589 425.5h1M593 425.5h1M597 425.5h1M475 427.5h1M483 427.5h1M491 427.5h1M495 427.5h1M499 427.5h1M503 427.5h1M507 427.5h1M511 427.5h1M515 427.5h1M591 427.5h1M595 427.5h1M599 427.5h1M603 427.5h1M607 427.5h1M611 427.5h1M619 427.5h1M501 429.5h1M505 429.5h1M509 429.5h1M513 429.5h1M517 429.5h1M521 429.5h1M525 429.5h1M529 429.5h1M533 429.5h1M537 429.5h1M545 429.5h1M553 429.5h1M561 429.5h1M569 429.5h1M577 429.5h1M585 429.5h1M589 429.5h1M593 429.5h1M597 429.5h1M463 431.5h1M471 431.5h1M479 431.5h1M483 431.5h1M487 431.5h1M491 431.5h1M495 431.5h1M499 431.5h1M503 431.5h1M507 431.5h1M511 431.5h1M591 431.5h1M595 431.5h1M599 431.5h1M603 431.5h1M607 431.5h1M615 431.5h1M623 431.5h1M497 433.5h1M501 433.5h1M505 433.5h1M509 433.5h1M513 433.5h1M517 433.5h1M521 433.5h1M525 433.5h1M529 433.5h1M533 433.5h1M541 433.5h1M549 433.5h1M557 433.5h1M565 433.5h1M573 433.5h1M581 433.5h1M589 433.5h1M593 433.5h1M597 433.5h1M601 433.5h1M467 435.5h1M475 435.5h1M479 435.5h1M483 435.5h1M487 435.5h1M491 435.5h1M495 435.5h1M499 435.5h1M503 435.5h1M507 435.5h1M591 435.5h1M595 435.5h1M599 435.5h1M603 435.5h1M607 435.5h1M611 435.5h1M619 435.5h1M489 437.5h1M493 437.5h1M497 437.5h1M501 437.5h1M505 437.5h1M509 437.5h1M513 437.5h1M517 437.5h1M521 437.5h1M529 437.5h1M537 437.5h1M545 437.5h1M553 437.5h1M561 437.5h1M569 437.5h1M577 437.5h1M585 437.5h1M589 437.5h1M593 437.5h1M597 437.5h1M447 439.5h1M455 439.5h1M463 439.5h1M471 439.5h1M475 439.5h1M479 439.5h1M483 439.5h1M487 439.5h1M491 439.5h1M495 439.5h1M587 439.5h1M591 439.5h1M595 439.5h1M599 439.5h1M603 439.5h1M607 439.5h1M611 439.5h1M615 439.5h1M623 439.5h1M485 441.5h1M489 441.5h1M493 441.5h1M497 441.5h1M501 441.5h1M505 441.5h1M509 441.5h1M513 441.5h1M517 441.5h1M525 441.5h1M533 441.5h1M541 441.5h1M549 441.5h1M557 441.5h1M565 441.5h1M573 441.5h1M581 441.5h1M585 441.5h1M589 441.5h1M593 441.5h1M597 441.5h1M459 443.5h1M467 443.5h1M471 443.5h1M475 443.5h1M479 443.5h1M483 443.5h1M487 443.5h1M491 443.5h1M587 443.5h1M591 443.5h1M595 443.5h1M599 443.5h1M603 443.5h1M607 443.5h1M611 443.5h1M619 443.5h1M481 445.5h1M485 445.5h1M489 445.5h1M493 445.5h1M497 445.5h1M501 445.5h1M505 445.5h1M509 445.5h1M513 445.5h1M521 445.5h1M529 445.5h1M537 445.5h1M545 445.5h1M553 445.5h1M561 445.5h1M569 445.5h1M577 445.5h1M585 445.5h1M589 445.5h1M593 445.5h1M597 445.5h1M439 447.5h1M447 447.5h1M455 447.5h1M463 447.5h1M467 447.5h1M471 447.5h1M475 447.5h1M479 447.5h1M483 447.5h1M487 447.5h1M587 447.5h1M591 447.5h1M595 447.5h1M599 447.5h1M603 447.5h1M607 447.5h1M615 447.5h1M623 447.5h1M477 449.5h1M481 449.5h1M485 449.5h1M489 449.5h1M493 449.5h1M497 449.5h1M501 449.5h1M505 449.5h1M509 449.5h1M517 449.5h1M525 449.5h1M533 449.5h1M541 449.5h1M549 449.5h1M557 449.5h1M565 449.5h1M573 449.5h1M577 449.5h1M581 449.5h1M585 449.5h1M589 449.5h1M593 449.5h1M451 451.5h1M459 451.5h1M463 451.5h1M467 451.5h1M471 451.5h1M475 451.5h1M479 451.5h1M483 451.5h1M583 451.5h1M587 451.5h1M591 451.5h1M595 451.5h1M599 451.5h1M603 451.5h1M611 451.5h1M619 451.5h1M473 453.5h1M477 453.5h1M481 453.5h1M485 453.5h1M489 453.5h1M493 453.5h1M497 453.5h1M505 453.5h1M513 453.5h1M521 453.5h1M529 453.5h1M537 453.5h1M545 453.5h1M553 453.5h1M561 453.5h1M569 453.5h1M573 453.5h1M577 453.5h1M581 453.5h1M585 453.5h1M589 453.5h1M431 455.5h1M439 455.5h1M447 455.5h1M455 455.5h1M459 455.5h1M463 455.5h1M467 455.5h1M471 455.5h1M475 455.5h1M479 455.5h1M575 455.5h1M579 455.5h1M583 455.5h1M587 455.5h1M591 455.5h1M595 455.5h1M599 455.5h1M603 455.5h1M607 455.5h1M615 455.5h1M623 455.5h1M469 457.5h1M473 457.5h1M477 457.5h1M481 457.5h1M485 457.5h1M489 457.5h1M493 457.5h1M501 457.5h1M509 457.5h1M517 457.5h1M525 457.5h1M533 457.5h1M541 457.5h1M549 457.5h1M557 457.5h1M565 457.5h1M569 457.5h1M573 457.5h1M577 457.5h1M581 457.5h1M585 457.5h1M435 459.5h1M443 459.5h1M451 459.5h1M455 459.5h1M459 459.5h1M463 459.5h1M467 459.5h1M471 459.5h1M475 459.5h1M567 459.5h1M571 459.5h1M575 459.5h1M579 459.5h1M583 459.5h1M587 459.5h1M591 459.5h1M595 459.5h1M599 459.5h1M603 459.5h1M611 459.5h1M465 461.5h1M469 461.5h1M473 461.5h1M477 461.5h1M481 461.5h1M485 461.5h1M489 461.5h1M497 461.5h1M505 461.5h1M513 461.5h1M521 461.5h1M529 461.5h1M537 461.5h1M545 461.5h1M553 461.5h1M557 461.5h1M561 461.5h1M565 461.5h1M569 461.5h1M573 461.5h1M577 461.5h1M581 461.5h1M585 461.5h1M423 463.5h1M431 463.5h1M439 463.5h1M447 463.5h1M451 463.5h1M455 463.5h1M459 463.5h1M463 463.5h1M467 463.5h1M471 463.5h1M559 463.5h1M563 463.5h1M567 463.5h1M571 463.5h1M575 463.5h1M579 463.5h1M583 463.5h1M587 463.5h1M591 463.5h1M595 463.5h1M599 463.5h1M607 463.5h1M615 463.5h1M623 463.5h1M461 465.5h1M465 465.5h1M469 465.5h1M473 465.5h1M477 465.5h1M481 465.5h1M485 465.5h1M489 465.5h1M493 465.5h1M501 465.5h1M509 465.5h1M517 465.5h1M525 465.5h1M533 465.5h1M541 465.5h1M549 465.5h1M557 465.5h1M561 465.5h1M565 465.5h1M569 465.5h1M573 465.5h1M577 465.5h1M427 467.5h1M435 467.5h1M443 467.5h1M447 467.5h1M451 467.5h1M455 467.5h1M459 467.5h1M463 467.5h1M467 467.5h1M555 467.5h1M559 467.5h1M563 467.5h1M567 467.5h1M571 467.5h1M575 467.5h1M579 467.5h1M583 467.5h1M587 467.5h1M591 467.5h1M595 467.5h1M603 467.5h1M457 469.5h1M461 469.5h1M465 469.5h1M469 469.5h1M473 469.5h1M477 469.5h1M481 469.5h1M485 469.5h1M489 469.5h1M497 469.5h1M505 469.5h1M513 469.5h1M521 469.5h1M529 469.5h1M537 469.5h1M545 469.5h1M549 469.5h1M553 469.5h1M557 469.5h1M561 469.5h1M565 469.5h1M415 471.5h1M423 471.5h1M431 471.5h1M439 471.5h1M443 471.5h1M447 471.5h1M451 471.5h1M455 471.5h1M459 471.5h1M463 471.5h1M547 471.5h1M551 471.5h1M555 471.5h1M559 471.5h1M563 471.5h1M567 471.5h1M571 471.5h1M575 471.5h1M579 471.5h1M583 471.5h1M587 471.5h1M591 471.5h1M599 471.5h1M607 471.5h1M615 471.5h1M453 473.5h1M457 473.5h1M461 473.5h1M465 473.5h1M469 473.5h1M473 473.5h1M477 473.5h1M481 473.5h1M485 473.5h1M493 473.5h1M501 473.5h1M509 473.5h1M517 473.5h1M525 473.5h1M533 473.5h1M541 473.5h1M545 473.5h1M549 473.5h1M553 473.5h1M557 473.5h1M561 473.5h1M427 475.5h1M435 475.5h1M439 475.5h1M443 475.5h1M447 475.5h1M451 475.5h1M455 475.5h1M459 475.5h1M539 475.5h1M543 475.5h1M547 475.5h1M551 475.5h1M555 475.5h1M559 475.5h1M563 475.5h1M567 475.5h1M571 475.5h1M575 475.5h1M579 475.5h1M583 475.5h1M587 475.5h1M595 475.5h1M449 477.5h1M453 477.5h1M457 477.5h1M461 477.5h1M465 477.5h1M469 477.5h1M473 477.5h1M477 477.5h1M481 477.5h1M485 477.5h1M489 477.5h1M497 477.5h1M505 477.5h1M513 477.5h1M521 477.5h1M529 477.5h1M537 477.5h1M541 477.5h1M545 477.5h1M549 477.5h1M553 477.5h1M415 479.5h1M423 479.5h1M431 479.5h1M435 479.5h1M439 479.5h1M443 479.5h1M447 479.5h1M451 479.5h1M455 479.5h1M459 479.5h1M535 479.5h1M539 479.5h1M543 479.5h1M547 479.5h1M551 479.5h1M555 479.5h1M559 479.5h1M563 479.5h1M567 479.5h1M571 479.5h1M575 479.5h1M583 479.5h1M591 479.5h1M599 479.5h1M607 479.5h1M445 481.5h1M449 481.5h1M453 481.5h1M457 481.5h1M461 481.5h1M465 481.5h1M469 481.5h1M473 481.5h1M477 481.5h1M481 481.5h1M485 481.5h1M493 481.5h1M501 481.5h1M509 481.5h1M517 481.5h1M525 481.5h1M533 481.5h1M537 481.5h1M541 481.5h1M545 481.5h1M549 481.5h1M419 483.5h1M427 483.5h1M431 483.5h1M435 483.5h1M439 483.5h1M443 483.5h1M447 483.5h1M451 483.5h1M455 483.5h1M531 483.5h1M535 483.5h1M539 483.5h1M543 483.5h1M547 483.5h1M551 483.5h1M555 483.5h1M559 483.5h1M563 483.5h1M567 483.5h1M571 483.5h1M579 483.5h1M587 483.5h1M441 485.5h1M445 485.5h1M449 485.5h1M453 485.5h1M457 485.5h1M461 485.5h1M465 485.5h1M469 485.5h1M473 485.5h1M477 485.5h1M481 485.5h1M485 485.5h1M489 485.5h1M497 485.5h1M505 485.5h1M513 485.5h1M521 485.5h1M529 485.5h1M533 485.5h1M537 485.5h1M415 487.5h1M423 487.5h1M431 487.5h1M435 487.5h1M439 487.5h1M443 487.5h1M447 487.5h1M451 487.5h1M523 487.5h1M527 487.5h1M531 487.5h1M535 487.5h1M539 487.5h1M543 487.5h1M547 487.5h1M551 487.5h1M555 487.5h1M559 487.5h1M563 487.5h1M567 487.5h1M575 487.5h1M583 487.5h1M591 487.5h1M599 487.5h1M441 489.5h1M445 489.5h1M449 489.5h1M453 489.5h1M457 489.5h1M461 489.5h1M465 489.5h1M469 489.5h1M473 489.5h1M477 489.5h1M481 489.5h1M485 489.5h1M489 489.5h1M493 489.5h1M501 489.5h1M509 489.5h1M517 489.5h1M521 489.5h1M525 489.5h1M529 489.5h1M533 489.5h1M419 491.5h1M427 491.5h1M431 491.5h1M435 491.5h1M439 491.5h1M443 491.5h1M447 491.5h1M519 491.5h1M523 491.5h1M527 491.5h1M531 491.5h1M535 491.5h1M539 491.5h1M543 491.5h1M547 491.5h1M551 491.5h1M555 491.5h1M559 491.5h1M563 491.5h1M571 491.5h1M579 491.5h1M441 493.5h1M445 493.5h1M449 493.5h1M453 493.5h1M457 493.5h1M461 493.5h1M465 493.5h1M469 493.5h1M473 493.5h1M477 493.5h1M481 493.5h1M485 493.5h1M489 493.5h1M493 493.5h1M497 493.5h1M505 493.5h1M513 493.5h1M517 493.5h1M521 493.5h1M525 493.5h1M529 493.5h1M415 495.5h1M423 495.5h1M427 495.5h1M431 495.5h1M435 495.5h1M439 495.5h1M443 495.5h1M447 495.5h1M515 495.5h1M519 495.5h1M523 495.5h1M527 495.5h1M531 495.5h1M535 495.5h1M539 495.5h1M543 495.5h1M547 495.5h1M551 495.5h1M559 495.5h1M567 495.5h1M575 495.5h1M583 495.5h1M441 497.5h1M445 497.5h1M449 497.5h1M453 497.5h1M457 497.5h1M461 497.5h1M465 497.5h1M469 497.5h1M473 497.5h1M477 497.5h1M481 497.5h1M485 497.5h1M489 497.5h1M493 497.5h1M497 497.5h1M501 497.5h1M505 497.5h1M509 497.5h1M513 497.5h1M517 497.5h1M521 497.5h1M525 497.5h1M419 499.5h1M427 499.5h1M431 499.5h1M435 499.5h1M439 499.5h1M443 499.5h1M447 499.5h1M511 499.5h1M515 499.5h1M519 499.5h1M523 499.5h1M527 499.5h1M531 499.5h1M535 499.5h1M539 499.5h1M543 499.5h1M547 499.5h1M555 499.5h1M563 499.5h1M437 501.5h1M441 501.5h1M445 501.5h1M449 501.5h1M453 501.5h1M457 501.5h1M461 501.5h1M465 501.5h1M469 501.5h1M473 501.5h1M477 501.5h1M481 501.5h1M485 501.5h1M489 501.5h1M493 501.5h1M497 501.5h1M501 501.5h1M505 501.5h1M509 501.5h1M513 501.5h1M517 501.5h1M415 503.5h1M423 503.5h1M427 503.5h1M431 503.5h1M435 503.5h1M439 503.5h1M443 503.5h1M447 503.5h1M507 503.5h1M511 503.5h1M515 503.5h1M519 503.5h1M523 503.5h1M527 503.5h1M531 503.5h1M535 503.5h1M543 503.5h1M551 503.5h1M559 503.5h1M567 503.5h1M575 503.5h1M437 505.5h1M441 505.5h1M445 505.5h1M449 505.5h1M453 505.5h1M457 505.5h1M461 505.5h1M465 505.5h1M469 505.5h1M473 505.5h1M477 505.5h1M481 505.5h1M485 505.5h1M489 505.5h1M493 505.5h1M497 505.5h1M501 505.5h1M505 505.5h1M509 505.5h1M513 505.5h1M419 507.5h1M427 507.5h1M431 507.5h1M435 507.5h1M439 507.5h1M443 507.5h1M447 507.5h1M503 507.5h1M507 507.5h1M511 507.5h1M515 507.5h1M519 507.5h1M523 507.5h1M527 507.5h1M531 507.5h1M539 507.5h1M547 507.5h1M441 509.5h1M445 509.5h1M449 509.5h1M453 509.5h1M457 509.5h1M461 509.5h1M465 509.5h1M469 509.5h1M473 509.5h1M477 509.5h1M481 509.5h1M485 509.5h1M489 509.5h1M493 509.5h1M497 509.5h1M501 509.5h1M505 509.5h1M509 509.5h1M415 511.5h1M423 511.5h1M431 511.5h1M435 511.5h1M439 511.5h1M443 511.5h1M447 511.5h1M499 511.5h1M503 511.5h1M507 511.5h1M511 511.5h1M515 511.5h1M519 511.5h1M523 511.5h1M527 511.5h1M535 511.5h1M543 511.5h1M551 511.5h1M559 511.5h1M567 511.5h1M441 513.5h1M445 513.5h1M449 513.5h1M453 513.5h1M457 513.5h1M461 513.5h1M465 513.5h1M469 513.5h1M473 513.5h1M477 513.5h1M481 513.5h1M485 513.5h1M489 513.5h1M493 513.5h1M497 513.5h1M501 513.5h1M505 513.5h1M509 513.5h1M427 515.5h1M431 515.5h1M435 515.5h1M439 515.5h1M443 515.5h1M447 515.5h1M495 515.5h1M499 515.5h1M503 515.5h1M507 515.5h1M511 515.5h1M515 515.5h1M519 515.5h1M523 515.5h1M531 515.5h1M445 517.5h1M449 517.5h1M453 517.5h1M457 517.5h1M461 517.5h1M465 517.5h1M469 517.5h1M473 517.5h1M477 517.5h1M481 517.5h1M485 517.5h1M489 517.5h1M493 517.5h1M497 517.5h1M501 517.5h1M505 517.5h1M415 519.5h1M423 519.5h1M431 519.5h1M435 519.5h1M439 519.5h1M443 519.5h1M447 519.5h1M451 519.5h1M455 519.5h1M495 519.5h1M499 519.5h1M503 519.5h1M507 519.5h1M511 519.5h1M515 519.5h1M519 519.5h1M527 519.5h1M535 519.5h1M543 519.5h1M445 521.5h1M449 521.5h1M453 521.5h1M457 521.5h1M461 521.5h1M465 521.5h1M469 521.5h1M473 521.5h1M477 521.5h1M481 521.5h1M485 521.5h1M489 521.5h1M493 521.5h1M497 521.5h1M501 521.5h1M427 523.5h1M435 523.5h1M439 523.5h1M443 523.5h1M447 523.5h1M451 523.5h1M455 523.5h1M459 523.5h1M487 523.5h1M491 523.5h1M495 523.5h1M499 523.5h1M503 523.5h1M507 523.5h1M511 523.5h1M515 523.5h1M523 523.5h1M449 525.5h1M453 525.5h1M457 525.5h1M461 525.5h1M465 525.5h1M469 525.5h1M473 525.5h1M477 525.5h1M481 525.5h1M485 525.5h1M489 525.5h1M493 525.5h1M415 527.5h1M423 527.5h1M431 527.5h1M435 527.5h1M439 527.5h1M443 527.5h1M447 527.5h1M451 527.5h1M455 527.5h1M459 527.5h1M463 527.5h1M467 527.5h1M479 527.5h1M483 527.5h1M487 527.5h1M491 527.5h1M495 527.5h1M499 527.5h1M503 527.5h1M507 527.5h1M511 527.5h1M519 527.5h1M527 527.5h1M535 527.5h1M453 529.5h1M457 529.5h1M461 529.5h1M465 529.5h1M469 529.5h1M473 529.5h1M477 529.5h1M481 529.5h1M485 529.5h1M489 529.5h1M435 531.5h1M443 531.5h1M447 531.5h1M451 531.5h1M455 531.5h1M459 531.5h1M463 531.5h1M467 531.5h1M471 531.5h1M475 531.5h1M479 531.5h1M483 531.5h1M487 531.5h1M491 531.5h1M495 531.5h1M499 531.5h1M503 531.5h1M507 531.5h1M515 531.5h1M461 533.5h1M465 533.5h1M469 533.5h1M473 533.5h1M477 533.5h1M481 533.5h1M485 533.5h1M423 535.5h1M431 535.5h1M439 535.5h1M443 535.5h1M447 535.5h1M451 535.5h1M455 535.5h1M459 535.5h1M463 535.5h1M467 535.5h1M471 535.5h1M475 535.5h1M479 535.5h1M483 535.5h1M487 535.5h1M491 535.5h1M495 535.5h1M499 535.5h1M503 535.5h1M511 535.5h1M519 535.5h1M527 535.5h1M443 539.5h1M451 539.5h1M455 539.5h1M459 539.5h1M463 539.5h1M467 539.5h1M471 539.5h1M475 539.5h1M479 539.5h1M483 539.5h1M487 539.5h1M491 539.5h1M499 539.5h1M507 539.5h1M431 543.5h1M439 543.5h1M447 543.5h1M455 543.5h1M463 543.5h1M467 543.5h1M471 543.5h1M475 543.5h1M479 543.5h1M483 543.5h1M487 543.5h1M495 543.5h1M503 543.5h1M511 543.5h1M451 547.5h1M459 547.5h1M467 547.5h1M475 547.5h1M483 547.5h1M491 547.5h1M439 551.5h1M447 551.5h1M455 551.5h1M463 551.5h1M471 551.5h1M479 551.5h1M487 551.5h1M495 551.5h1M471 559.5h1M555 407.5h2M559 407.5h2M563 407.5h2M567 407.5h2M551 411.5h2M555 411.5h2M559 411.5h2M563 411.5h2M567 411.5h2M571 411.5h2M575 411.5h2M579 411.5h2M557 413.5h2M565 413.5h2M573 413.5h2M547 415.5h2M551 415.5h2M555 415.5h2M559 415.5h2M563 415.5h2M567 415.5h2M571 415.5h2M575 415.5h2M579 415.5h2M583 415.5h2M553 417.5h2M561 417.5h2M569 417.5h2M577 417.5h2M535 419.5h2M539 419.5h2M543 419.5h2M547 419.5h2M551 419.5h2M555 419.5h2M559 419.5h2M563 419.5h2M567 419.5h2M571 419.5h2M575 419.5h2M579 419.5h2M583 419.5h2M587 419.5h2M549 421.5h2M557 421.5h2M565 421.5h2M573 421.5h2M581 421.5h2M531 423.5h2M535 423.5h2M539 423.5h2M543 423.5h2M547 423.5h2M551 423.5h2M555 423.5h2M559 423.5h2M563 423.5h2M567 423.5h2M571 423.5h2M575 423.5h2M579 423.5h2M583 423.5h2M587 423.5h2M545 425.5h2M553 425.5h2M561 425.5h2M569 425.5h2M577 425.5h2M585 425.5h2M519 427.5h2M523 427.5h2M527 427.5h2M531 427.5h2M535 427.5h2M539 427.5h2M543 427.5h2M547 427.5h2M551 427.5h2M555 427.5h2M559 427.5h2M563 427.5h2M567 427.5h2M571 427.5h2M575 427.5h2M579 427.5h2M583 427.5h2M587 427.5h2M541 429.5h2M549 429.5h2M557 429.5h2M565 429.5h2M573 429.5h2M581 429.5h2M515 431.5h2M519 431.5h2M523 431.5h2M527 431.5h2M531 431.5h2M535 431.5h2M539 431.5h2M543 431.5h2M547 431.5h2M551 431.5h2M555 431.5h2M559 431.5h2M563 431.5h2M567 431.5h2M571 431.5h2M575 431.5h2M579 431.5h2M583 431.5h2M587 431.5h2M537 433.5h2M545 433.5h2M553 433.5h2M561 433.5h2M569 433.5h2M577 433.5h2M585 433.5h2M511 435.5h2M515 435.5h2M519 435.5h2M523 435.5h2M527 435.5h2M531 435.5h2M535 435.5h2M539 435.5h2M543 435.5h2M547 435.5h2M551 435.5h2M555 435.5h2M559 435.5h2M563 435.5h2M567 435.5h2M571 435.5h2M575 435.5h2M579 435.5h2M583 435.5h2M587 435.5h2M525 437.5h2M533 437.5h2M541 437.5h2M549 437.5h2M557 437.5h2M565 437.5h2M573 437.5h2M581 437.5h2M499 439.5h2M503 439.5h2M507 439.5h2M511 439.5h2M515 439.5h2M519 439.5h2M523 439.5h2M527 439.5h2M531 439.5h2M535 439.5h2M539 439.5h2M543 439.5h2M547 439.5h2M551 439.5h2M555 439.5h2M559 439.5h2M563 439.5h2M567 439.5h2M571 439.5h2M575 439.5h2M579 439.5h2M583 439.5h2M521 441.5h2M529 441.5h2M537 441.5h2M545 441.5h2M553 441.5h2M561 441.5h2M569 441.5h2M577 441.5h2M495 443.5h2M499 443.5h2M503 443.5h2M507 443.5h2M511 443.5h2M515 443.5h2M519 443.5h2M523 443.5h2M527 443.5h2M531 443.5h2M535 443.5h2M539 443.5h2M543 443.5h2M547 443.5h2M551 443.5h2M555 443.5h2M559 443.5h2M563 443.5h2M567 443.5h2M571 443.5h2M575 443.5h2M579 443.5h2M583 443.5h2M517 445.5h2M525 445.5h2M533 445.5h2M541 445.5h2M549 445.5h2M557 445.5h2M565 445.5h2M573 445.5h2M581 445.5h2M491 447.5h2M495 447.5h2M499 447.5h2M503 447.5h2M507 447.5h2M511 447.5h2M515 447.5h2M519 447.5h2M523 447.5h2M527 447.5h2M531 447.5h2M535 447.5h2M539 447.5h2M543 447.5h2M547 447.5h2M551 447.5h2M555 447.5h2M559 447.5h2M563 447.5h2M567 447.5h2M571 447.5h2M575 447.5h2M579 447.5h2M583 447.5h2M513 449.5h2M521 449.5h2M529 449.5h2M537 449.5h2M545 449.5h2M553 449.5h2M561 449.5h2M569 449.5h2M487 451.5h2M491 451.5h2M495 451.5h2M499 451.5h2M503 451.5h2M507 451.5h2M511 451.5h2M515 451.5h2M519 451.5h2M523 451.5h2M527 451.5h2M531 451.5h2M535 451.5h2M539 451.5h2M543 451.5h2M547 451.5h2M551 451.5h2M555 451.5h2M559 451.5h2M563 451.5h2M567 451.5h2M571 451.5h2M575 451.5h2M579 451.5h2M501 453.5h2M509 453.5h2M517 453.5h2M525 453.5h2M533 453.5h2M541 453.5h2M549 453.5h2M557 453.5h2M565 453.5h2M483 455.5h2M487 455.5h2M491 455.5h2M495 455.5h2M499 455.5h2M503 455.5h2M507 455.5h2M511 455.5h2M515 455.5h2M519 455.5h2M523 455.5h2M527 455.5h2M531 455.5h2M535 455.5h2M539 455.5h2M543 455.5h2M547 455.5h2M551 455.5h2M555 455.5h2M559 455.5h2M563 455.5h2M567 455.5h2M571 455.5h2M497 457.5h2M505 457.5h2M513 457.5h2M521 457.5h2M529 457.5h2M537 457.5h2M545 457.5h2M553 457.5h2M561 457.5h2M479 459.5h2M483 459.5h2M487 459.5h2M491 459.5h2M495 459.5h2M499 459.5h2M503 459.5h2M507 459.5h2M511 459.5h2M515 459.5h2M519 459.5h2M523 459.5h2M527 459.5h2M531 459.5h2M535 459.5h2M539 459.5h2M543 459.5h2M547 459.5h2M551 459.5h2M555 459.5h2M559 459.5h2M563 459.5h2M493 461.5h2M501 461.5h2M509 461.5h2M517 461.5h2M525 461.5h2M533 461.5h2M541 461.5h2M549 461.5h2M475 463.5h2M479 463.5h2M483 463.5h2M487 463.5h2M491 463.5h2M495 463.5h2M499 463.5h2M503 463.5h2M507 463.5h2M511 463.5h2M515 463.5h2M519 463.5h2M523 463.5h2M527 463.5h2M531 463.5h2M535 463.5h2M539 463.5h2M543 463.5h2M547 463.5h2M551 463.5h2M555 463.5h2M497 465.5h2M505 465.5h2M513 465.5h2M521 465.5h2M529 465.5h2M537 465.5h2M545 465.5h2M553 465.5h2M471 467.5h2M475 467.5h2M479 467.5h2M483 467.5h2M487 467.5h2M491 467.5h2M495 467.5h2M499 467.5h2M503 467.5h2M507 467.5h2M511 467.5h2M515 467.5h2M519 467.5h2M523 467.5h2M527 467.5h2M531 467.5h2M535 467.5h2M539 467.5h2M543 467.5h2M547 467.5h2M551 467.5h2M493 469.5h2M501 469.5h2M509 469.5h2M517 469.5h2M525 469.5h2M533 469.5h2M541 469.5h2M467 471.5h2M471 471.5h2M475 471.5h2M479 471.5h2M483 471.5h2M487 471.5h2M491 471.5h2M495 471.5h2M499 471.5h2M503 471.5h2M507 471.5h2M511 471.5h2M515 471.5h2M519 471.5h2M523 471.5h2M527 471.5h2M531 471.5h2M535 471.5h2M539 471.5h2M543 471.5h2M489 473.5h2M497 473.5h2M505 473.5h2M513 473.5h2M521 473.5h2M529 473.5h2M537 473.5h2M463 475.5h2M467 475.5h2M471 475.5h2M475 475.5h2M479 475.5h2M483 475.5h2M487 475.5h2M491 475.5h2M495 475.5h2M499 475.5h2M503 475.5h2M507 475.5h2M511 475.5h2M515 475.5h2M519 475.5h2M523 475.5h2M527 475.5h2M531 475.5h2M535 475.5h2M493 477.5h2M501 477.5h2M509 477.5h2M517 477.5h2M525 477.5h2M533 477.5h2M463 479.5h2M467 479.5h2M471 479.5h2M475 479.5h2M479 479.5h2M483 479.5h2M487 479.5h2M491 479.5h2M495 479.5h2M499 479.5h2M503 479.5h2M507 479.5h2M511 479.5h2M515 479.5h2M519 479.5h2M523 479.5h2M527 479.5h2M531 479.5h2M489 481.5h2M497 481.5h2M505 481.5h2M513 481.5h2M521 481.5h2M529 481.5h2M459 483.5h2M463 483.5h2M467 483.5h2M471 483.5h2M475 483.5h2M479 483.5h2M483 483.5h2M487 483.5h2M491 483.5h2M495 483.5h2M499 483.5h2M503 483.5h2M507 483.5h2M511 483.5h2M515 483.5h2M519 483.5h2M523 483.5h2M527 483.5h2M493 485.5h2M501 485.5h2M509 485.5h2M517 485.5h2M525 485.5h2M455 487.5h2M459 487.5h2M463 487.5h2M467 487.5h2M471 487.5h2M475 487.5h2M479 487.5h2M483 487.5h2M487 487.5h2M491 487.5h2M495 487.5h2M499 487.5h2M503 487.5h2M507 487.5h2M511 487.5h2M515 487.5h2M519 487.5h2M497 489.5h2M505 489.5h2M513 489.5h2M451 491.5h2M455 491.5h2M459 491.5h2M463 491.5h2M467 491.5h2M471 491.5h2M475 491.5h2M479 491.5h2M483 491.5h2M487 491.5h2M491 491.5h2M495 491.5h2M499 491.5h2M503 491.5h2M507 491.5h2M511 491.5h2M515 491.5h2M501 493.5h2M509 493.5h2M451 495.5h2M455 495.5h2M459 495.5h2M463 495.5h2M467 495.5h2M471 495.5h2M475 495.5h2M479 495.5h2M483 495.5h2M487 495.5h2M491 495.5h2M495 495.5h2M499 495.5h2M503 495.5h2M507 495.5h2M511 495.5h2M451 499.5h2M455 499.5h2M459 499.5h2M463 499.5h2M467 499.5h2M471 499.5h2M475 499.5h2M479 499.5h2M483 499.5h2M487 499.5h2M491 499.5h2M495 499.5h2M499 499.5h2M503 499.5h2M507 499.5h2M451 503.5h2M455 503.5h2M459 503.5h2M463 503.5h2M467 503.5h2M471 503.5h2M475 503.5h2M479 503.5h2M483 503.5h2M487 503.5h2M491 503.5h2M495 503.5h2M499 503.5h2M503 503.5h2M451 507.5h2M455 507.5h2M459 507.5h2M463 507.5h2M467 507.5h2M471 507.5h2M475 507.5h2M479 507.5h2M483 507.5h2M487 507.5h2M491 507.5h2M495 507.5h2M499 507.5h2M451 511.5h2M455 511.5h2M459 511.5h2M463 511.5h2M467 511.5h2M471 511.5h2M475 511.5h2M479 511.5h2M483 511.5h2M487 511.5h2M491 511.5h2M495 511.5h2M451 515.5h2M455 515.5h2M459 515.5h2M463 515.5h2M467 515.5h2M471 515.5h2M475 515.5h2M479 515.5h2M483 515.5h2M487 515.5h2M491 515.5h2M459 519.5h2M463 519.5h2M467 519.5h2M471 519.5h2M475 519.5h2M479 519.5h2M483 519.5h2M487 519.5h2M491 519.5h2M463 523.5h2M467 523.5h2M471 523.5h2M475 523.5h2M479 523.5h2M483 523.5h2M471 527.5h2M475 527.5h2" stroke="#161616" stroke-width="1" shape-rendering="crispEdges" fill="none"/></svg></div>
<div class="a" style="left:788px;top:107px;width:20px;height:589px;background:#303030"></div>
<div class="a" style="left:789px;top:117px;width:18px;height:557px;border-radius:8px;background:linear-gradient(to right,#404040,#484848 40%,#2e2e2e)"></div>
<svg class="a" style="left:792px;top:108px" width="12" height="9"><path d="M6 .500L11 8H1z" fill="#b4b4b4"/></svg>
<svg class="a" style="left:792px;top:676px" width="12" height="9"><path d="M6 8.500L11 1H1z" fill="#b4b4b4"/></svg>
<div class="a" style="left:789px;top:323px;width:18px;height:152px;border-radius:5px;background:linear-gradient(to right,#6e6e6e,#787878 50%,#6c6c6c)"></div>
<div class="a" style="left:233px;top:686px;width:575px;height:10px;background:#303030"></div>
<div class="a" style="left:243px;top:687px;width:554px;height:18px;border-radius:8px;background:linear-gradient(#404040,#484848)"></div>
<svg class="a" style="left:234px;top:688px" width="9" height="12"><path d="M.500 6L8 1v10z" fill="#b4b4b4"/></svg>
<svg class="a" style="left:798px;top:688px" width="9" height="12"><path d="M8.500 6L1 1v10z" fill="#b4b4b4"/></svg>
<div class="a" style="left:453px;top:687px;width:149px;height:18px;border-radius:5px;background:linear-gradient(#767676,#6e6e6e)"></div>
<div class="a" style="left:808px;top:84px;width:5px;height:612px;background:#262626"></div>
<div class="a" style="left:813px;top:84px;width:211px;height:612px;background:#232323"></div>
<div class="hd" style="left:813px;top:84px;width:211px"><svg class="a" style="left:185px;top:3px" width="12" height="12" viewBox="0 0 11 11"><path d="M5 2.500H1.500v7h7V6" stroke="#bdbdbd" stroke-width="1.100" fill="none"/><path d="M4.500 6.500L9 2" stroke="#bdbdbd" stroke-width="1.100"/><path d="M6 1h4v4z" fill="#bdbdbd"/></svg><svg class="a" style="left:203px;top:4px" width="10" height="10" viewBox="0 0 10 10"><path d="M1.300 1.300l7.400 7.400M8.700 1.300l-7.400 7.400" stroke="#c4c4c4" stroke-width="2.400"/></svg></div>
<div class="t fit" style="transform:scaleX(0.825);transform-origin:0 0;left:897px;top:90.500px;font-size:12px;color:#d8d8d8">Lớp</div>
<div class="t fit" style="transform:scaleX(0.952);transform-origin:0 0;left:819px;top:114px;font-size:11.500px;color:#dedede">Độ trong</div>
<div class="a" style="left:871px;top:112px;width:114px;height:15px;background:linear-gradient(to right,#84c8f8,#4f9ad2)"></div>
<div class="t fit" style="transform:scaleX(0.951);transform-origin:0 0;left:991px;top:114px;font-size:11.500px;color:#dedede">100 %</div>
<div class="t fit" style="transform:scaleX(0.943);transform-origin:0 0;left:819px;top:140px;font-size:11.500px;color:#dedede">Pha trộn</div>
<div class="a" style="left:875px;top:134px;width:148px;height:21px;background:#474747;border-radius:4px"></div>
<div class="t fit" style="transform:scaleX(0.899);transform-origin:0 0;left:877px;top:140px;font-size:11.500px;color:#dedede">Bình thường</div>
<svg class="a" style="left:1010px;top:142px" width="9" height="5"><path d="M.500 0h8l-4 4.500z" fill="#9a9a9a"/></svg>
<div class="cb dis" style="left:822px;top:166px"></div>
<div class="t fit" style="transform:scaleX(0.923);transform-origin:0 0;left:838px;top:165px;font-size:11.500px;color:#7c7c7c">Bảo vệ alpha</div>
<div class="cb" style="left:913px;top:166px"></div>
<div class="t fit" style="transform:scaleX(0.931);transform-origin:0 0;left:929px;top:165px;font-size:11.500px;color:#dedede">Xén bớt</div>
<div class="cb" style="left:979px;top:166px"></div>
<div class="t fit" style="transform:scaleX(0.931);transform-origin:0 0;left:995px;top:165px;font-size:11.500px;color:#dedede">Khóa</div>
<div class="a" style="left:815px;top:185px;width:192px;height:492px;background:#4a4847"></div>
<div class="a" style="left:815px;top:185px;width:191px;height:39px;background:#4f9bd8"></div>
<div class="a" style="left:815px;top:185px;width:20px;height:39px;background:#5c5c5c"></div>
<div class="a" style="left:815px;top:225px;width:191px;height:38px;background:#5a5a5a"></div>
<div class="a" style="left:815px;top:224px;width:191px;height:1px;background:#3a3a3a"></div>
<div class="a" style="left:815px;top:263px;width:191px;height:1px;background:#3a3a3a"></div>
<div class="a" style="left:820px;top:199px;width:10px;height:10px;border-radius:50%;background:radial-gradient(circle at 40% 35%,#f4f4f4,#c4c4c4)"></div>
<div class="a" style="left:820px;top:239px;width:10px;height:10px;border-radius:50%;background:radial-gradient(circle at 40% 35%,#f4f4f4,#c4c4c4)"></div>
<div class="a" style="left:850px;top:187px;width:35px;height:35px;background-color:#fbfbfb;background-image:conic-gradient(#fbfbfb 25%,#e9e9e9 0 50%,#fbfbfb 0 75%,#e9e9e9 0);background-size:10px 10px;overflow:hidden"><div class="a" style="left:12px;top:18px;width:18px;height:8px;background:#777;opacity:.5;border-radius:50%;filter:blur(2.400px);transform:rotate(-30deg)"></div></div>
<div class="a" style="left:850px;top:227px;width:35px;height:35px;background-color:#fbfbfb;background-image:conic-gradient(#fbfbfb 25%,#e9e9e9 0 50%,#fbfbfb 0 75%,#e9e9e9 0);background-size:10px 10px;overflow:hidden"><div class="a" style="left:4px;top:8px;width:20px;height:9px;background:#ffa66e;opacity:.75;border-radius:50%;filter:blur(2.200px);transform:rotate(-32deg)"></div></div>
<div class="t" style="left:901px;top:197px;font-size:13.500px;font-weight:bold;color:#fff">Lớp2</div>
<div class="t" style="left:919px;top:211px;font-size:10.400px;color:#eef4fa">[Net 60L] 8</div>
<div class="a" style="left:971px;top:210px;width:10px;height:10px;background:#000"></div>
<svg class="a" style="left:984px;top:195px" width="20" height="20" viewBox="0 0 20 20"><path d="M19.06 8.42L19.06 11.58L16.22 11.49L15.46 13.34L17.53 15.29L15.29 17.53L13.34 15.46L11.49 16.22L11.58 19.06L8.42 19.06L8.51 16.22L6.66 15.46L4.71 17.53L2.47 15.29L4.54 13.34L3.78 11.49L0.94 11.58L0.94 8.42L3.78 8.51L4.54 6.66L2.47 4.71L4.71 2.47L6.66 4.54L8.51 3.78L8.42 0.94L11.58 0.94L11.49 3.78L13.34 4.54L15.29 2.47L17.53 4.71L15.46 6.66L16.22 8.51Z M7.40 10.00a2.6 2.6 0 1 0 5.20 0a2.6 2.6 0 1 0 -5.20 0z" fill="#fff" fill-rule="evenodd"/></svg>
<div class="t" style="left:901px;top:238px;font-size:13px;color:#f0f0f0">Lớp1</div>
<div class="a" style="left:1007px;top:185px;width:17px;height:492px;background:#2e2e2e"></div>
<svg class="a" style="left:1010px;top:186px" width="10" height="8"><path d="M5 .500L9.500 7.500H.500z" fill="#b0b0b0"/></svg>
<svg class="a" style="left:1010px;top:664px" width="10" height="8"><path d="M5 7.500L9.500 .500H.500z" fill="#b0b0b0"/></svg>
<div class="a" style="left:1008px;top:196px;width:20px;height:466px;border-radius:5px;background:linear-gradient(to right,#6a6a6a,#767676)"></div>
<div class="a" style="left:813px;top:677px;width:211px;height:19px;background:#242424"></div>
<div class="btn " style="left:819px;top:678px;width:23px;height:23px"><svg width="23" height="23" viewBox="0 0 23 23" fill="none" stroke="none"><path d="M6.500 5.500h7l3.500 3.500v12h-10.500z" stroke="#d8d8d8" stroke-width="1.300" fill="none"/><path d="M13.300 5.700v3.500h3.500z" fill="#d8d8d8"/></svg></div>
<div class="btn " style="left:846px;top:678px;width:23px;height:23px"><svg width="23" height="23" viewBox="0 0 23 23" fill="none" stroke="none"><path d="M6.500 5.500h7l3.500 3.500v12h-10.500z" stroke="#d8d8d8" stroke-width="1.300" fill="none"/><path d="M13.300 5.700v3.500h3.500z" fill="#d8d8d8"/><text x="11.700" y="17.500" font-size="9" font-weight="bold" text-anchor="middle" fill="#e0e0e0" font-family="Liberation Sans,sans-serif">8</text></svg></div>
<div class="btn " style="left:873px;top:678px;width:23px;height:23px"><svg width="23" height="23" viewBox="0 0 23 23" fill="none" stroke="none"><path d="M6.500 5.500h7l3.500 3.500v12h-10.500z" stroke="#d8d8d8" stroke-width="1.300" fill="none"/><path d="M13.300 5.700v3.500h3.500z" fill="#d8d8d8"/><text x="11.700" y="17.500" font-size="9" font-weight="bold" text-anchor="middle" fill="#e0e0e0" font-family="Liberation Sans,sans-serif">1</text></svg></div>
<div class="btn " style="left:900px;top:678px;width:30px;height:23px"><svg width="30" height="23" viewBox="0 0 30 23" fill="none" stroke="none"><path d="M5.500 5.500h6l3 3v12h-9z" stroke="#d8d8d8" stroke-width="1.200" fill="none"/><path d="M13.500 14v7M10 17.500h7" stroke="#eee" stroke-width="1.600"/><path d="M19.500 11.500h7l-3.500 4z" fill="#eee"/></svg></div>
<div class="btn " style="left:934px;top:678px;width:23px;height:23px"><svg width="23" height="23" viewBox="0 0 23 23" fill="none" stroke="none"><path d="M4 7.500h5.500l1.500 2h8.500v10h-15.500z" fill="#dcdcdc"/></svg></div>
<div class="a" style="left:962px;top:684px;width:1px;height:11px;background:#6a6a6a"></div>
<div class="btn " style="left:968px;top:678px;width:23px;height:23px"><svg width="23" height="23" viewBox="0 0 23 23" fill="none" stroke="none"><rect x="8.500" y="6.500" width="9.500" height="9.500" stroke="#d0d0d0" stroke-width="1.300"/><rect x="5.500" y="9.500" width="9.500" height="9.500" stroke="#d0d0d0" stroke-width="1.300" fill="#4b4b4b"/></svg></div>
<div class="a" style="left:1016px;top:680px;width:8px;height:16px;background:#484848;border-radius:2px"></div>
</body></html>
